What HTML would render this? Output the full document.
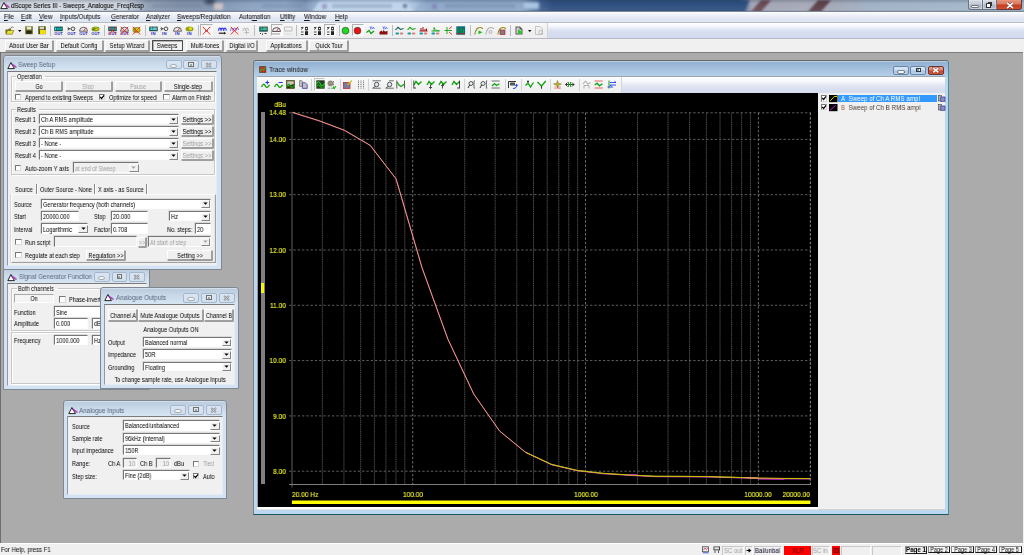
<!DOCTYPE html><html><head><meta charset="utf-8"><style>
html,body{margin:0;padding:0}
body{width:1024px;height:555px;overflow:hidden;position:relative;font-family:"Liberation Sans",sans-serif;background:#ababab}
div{position:absolute}
.t{white-space:nowrap;will-change:transform}
svg.a{position:absolute;overflow:visible}
</style></head><body>
<div style="left:0;top:0;width:1024px;height:11.5px;overflow:hidden;background:linear-gradient(90deg,#cdd3db 0px,#d3d9e1 60px,#c8d0da 125px,#909fb5 148px,#8393ab 180px,#8094b0 215px,#8ba2c0 250px,#8fa8c6 285px,#7d96b6 305px,#9db6d4 318px,#b9d0ea 330px,#bad1eb 405px,#9fb9d8 418px,#8ba5c7 428px,#8aa4c6 505px,#8ba6c8 520px,#3f5f8e 540px,#2e4f7e 552px,#2d4f7e 738px,#a0a4b4 752px,#a6a9b8 800px,#a2a8b7 836px,#a0b1c5 870px,#a3b6c9 960px,#9fb3c8 1024px)">
<div style="left:205px;top:-2px;width:10px;height:6px;background:#2a3040;filter:blur(2px);opacity:.8"></div>
<div style="left:214px;top:2.5px;width:9px;height:7px;background:#e6d2cc;filter:blur(1.5px);opacity:.75"></div>
<div style="left:523px;top:2px;width:16px;height:7px;background:#a9c3e0;filter:blur(1.5px)"></div>
<svg style="position:absolute;left:0;top:0;filter:blur(1px)" width="1024" height="12"><path d="M700 -2H750L744 14H700Z" fill="#2d4f7e"/><path d="M749 14L759 14L773 -2L763 -2Z" fill="#6a4a52"/><path d="M806 14L819 14L833 -2L820 -2Z" fill="#5c4048"/><path d="M312 12L320 1.2H405L414 12Z" fill="#bed4ec"/><path d="M414 12L422 1.2H520L528 12Z" fill="#8fa9ca" opacity="0.5"/></svg>
<div style="left:322px;top:3.5px;width:5px;height:5px;background:#8a78b0;filter:blur(1px);opacity:.6"></div>
<div style="left:403px;top:3.5px;width:4px;height:4px;background:#404a60;filter:blur(0.8px);opacity:.6"></div>
<div style="left:332px;top:4px;width:60px;height:3.5px;background:#7f90a8;filter:blur(1.2px);opacity:.45"></div>
<div style="left:432px;top:4px;width:5px;height:5px;background:#7a6aa8;filter:blur(1px);opacity:.5"></div>
<div style="left:445px;top:4px;width:70px;height:3.5px;background:#6a82a4;filter:blur(1.2px);opacity:.4"></div>
<div style="left:152px;top:4px;width:50px;height:3.5px;background:#6a7a92;filter:blur(1.2px);opacity:.35"></div>
<div style="left:262px;top:4px;width:40px;height:3.5px;background:#6a82a0;filter:blur(1.2px);opacity:.35"></div>
</div>
<div style="left:0;top:0;width:1024px;height:11.5px;background:linear-gradient(rgba(30,40,60,0.22),rgba(255,255,255,0) 30%,rgba(255,255,255,0.06) 80%,rgba(60,70,90,0.28))"></div>
<svg class="a" style="left:0.30px;top:2.20px" width="10" height="8"><path d="M3.9 0.5L0.8 6.6H7.4Z" fill="#fff" stroke="#1a1a1a" stroke-width="0.95" stroke-linejoin="round"/><path d="M4.3 2.2L9.4 5.6" stroke="#d0209a" stroke-width="1.1"/><path d="M4.6 1.5L9.6 4.8" stroke="#3a3ac8" stroke-width="0.55"/></svg>
<div class="t" style="left:10.80px;transform-origin:0 50%;top:1.40px;height:9px;line-height:9px;font-size:6.710px;color:#101010;transform:scaleX(0.9091);-webkit-text-stroke:0.12px #101010;">dScope Series III - Sweeps_Analogue_FreqResp</div>
<div style="left:967.90px;top:-1.00px;width:14.50px;height:11.30px;background:linear-gradient(#d2d9e3,#c4ccd8 48%,#a9b4c3 52%,#b6c0cd);border:1px solid #6a7382;border-right:none;border-radius:0 0 0 3px;box-sizing:border-box;box-shadow:inset 0 0 0 0.6px rgba(255,255,255,0.5)"></div>
<div style="left:972.40px;top:5.50px;width:5.60px;height:1.80px;background:#fff;box-shadow:0 0 0 0.6px #333;border-radius:0.5px"></div>
<div style="left:982.40px;top:-1.00px;width:14.50px;height:11.30px;background:linear-gradient(#d2d9e3,#c4ccd8 48%,#a9b4c3 52%,#b6c0cd);border:1px solid #6a7382;box-sizing:border-box;box-shadow:inset 0 0 0 0.6px rgba(255,255,255,0.5)"></div>
<div style="left:987.60px;top:1.60px;width:4.80px;height:4.60px;background:#fff;border:0.8px solid #333;border-top-width:1.3px;box-sizing:border-box"></div>
<div style="left:986.20px;top:3.30px;width:4.70px;height:4.60px;background:#fff;border:0.8px solid #333;border-top-width:1.3px;box-sizing:border-box"></div>
<div style="left:996.90px;top:-1.00px;width:25.10px;height:11.30px;background:linear-gradient(#e8957e,#db765c 48%,#c63b1e 52%,#d44e2e);border:1px solid #6a3a3a;border-left:none;border-radius:0 0 3px 0;box-sizing:border-box"></div>
<svg class="a" style="left:1005.5px;top:1.6px" width="8" height="7"><path d="M1 0.8L7 6.2M7 0.8L1 6.2" stroke="#5a2a2a" stroke-width="2.6" opacity="0.7"/><path d="M1 0.8L7 6.2M7 0.8L1 6.2" stroke="#fff" stroke-width="1.6"/></svg>
<div style="left:0.00px;top:11.00px;width:1024.00px;height:1.00px;background:#7d8796"></div>
<div style="left:0.00px;top:12.00px;width:1024.00px;height:10.30px;background:linear-gradient(#fdfdfe,#eef1f8 30%,#e3e8f4 60%,#dde3f1)"></div>
<div style="left:0.00px;top:22.30px;width:1024.00px;height:0.70px;background:#b9bec9"></div>
<div class="t" style="left:4.00px;transform-origin:0 50%;top:12.20px;height:9px;line-height:9px;font-size:6.944px;color:#141414;transform:scaleX(0.8929);-webkit-text-stroke:0.07px #141414;text-decoration-thickness:0.4px;text-decoration-color:rgba(0,0,0,0.55);text-underline-offset:0.7px;"><u>F</u>ile</div>
<div class="t" style="left:21.00px;transform-origin:0 50%;top:12.20px;height:9px;line-height:9px;font-size:6.944px;color:#141414;transform:scaleX(0.8929);-webkit-text-stroke:0.07px #141414;text-decoration-thickness:0.4px;text-decoration-color:rgba(0,0,0,0.55);text-underline-offset:0.7px;"><u>E</u>dit</div>
<div class="t" style="left:38.75px;transform-origin:0 50%;top:12.20px;height:9px;line-height:9px;font-size:6.944px;color:#141414;transform:scaleX(0.8929);-webkit-text-stroke:0.07px #141414;text-decoration-thickness:0.4px;text-decoration-color:rgba(0,0,0,0.55);text-underline-offset:0.7px;"><u>V</u>iew</div>
<div class="t" style="left:59.50px;transform-origin:0 50%;top:12.20px;height:9px;line-height:9px;font-size:6.944px;color:#141414;transform:scaleX(0.8929);-webkit-text-stroke:0.07px #141414;text-decoration-thickness:0.4px;text-decoration-color:rgba(0,0,0,0.55);text-underline-offset:0.7px;"><u>I</u>nputs/Outputs</div>
<div class="t" style="left:110.50px;transform-origin:0 50%;top:12.20px;height:9px;line-height:9px;font-size:6.944px;color:#141414;transform:scaleX(0.8929);-webkit-text-stroke:0.07px #141414;text-decoration-thickness:0.4px;text-decoration-color:rgba(0,0,0,0.55);text-underline-offset:0.7px;"><u>G</u>enerator</div>
<div class="t" style="left:145.75px;transform-origin:0 50%;top:12.20px;height:9px;line-height:9px;font-size:6.944px;color:#141414;transform:scaleX(0.8929);-webkit-text-stroke:0.07px #141414;text-decoration-thickness:0.4px;text-decoration-color:rgba(0,0,0,0.55);text-underline-offset:0.7px;"><u>A</u>nalyzer</div>
<div class="t" style="left:177.00px;transform-origin:0 50%;top:12.20px;height:9px;line-height:9px;font-size:6.944px;color:#141414;transform:scaleX(0.8929);-webkit-text-stroke:0.07px #141414;text-decoration-thickness:0.4px;text-decoration-color:rgba(0,0,0,0.55);text-underline-offset:0.7px;"><u>S</u>weeps/Regulation</div>
<div class="t" style="left:238.50px;transform-origin:0 50%;top:12.20px;height:9px;line-height:9px;font-size:6.944px;color:#141414;transform:scaleX(0.8929);-webkit-text-stroke:0.07px #141414;text-decoration-thickness:0.4px;text-decoration-color:rgba(0,0,0,0.55);text-underline-offset:0.7px;">Auto<u>m</u>ation</div>
<div class="t" style="left:279.80px;transform-origin:0 50%;top:12.20px;height:9px;line-height:9px;font-size:6.944px;color:#141414;transform:scaleX(0.8929);-webkit-text-stroke:0.07px #141414;text-decoration-thickness:0.4px;text-decoration-color:rgba(0,0,0,0.55);text-underline-offset:0.7px;"><u>U</u>tility</div>
<div class="t" style="left:303.90px;transform-origin:0 50%;top:12.20px;height:9px;line-height:9px;font-size:6.944px;color:#141414;transform:scaleX(0.8929);-webkit-text-stroke:0.07px #141414;text-decoration-thickness:0.4px;text-decoration-color:rgba(0,0,0,0.55);text-underline-offset:0.7px;"><u>W</u>indow</div>
<div class="t" style="left:335.20px;transform-origin:0 50%;top:12.20px;height:9px;line-height:9px;font-size:6.944px;color:#141414;transform:scaleX(0.8929);-webkit-text-stroke:0.07px #141414;text-decoration-thickness:0.4px;text-decoration-color:rgba(0,0,0,0.55);text-underline-offset:0.7px;"><u>H</u>elp</div>
<div style="left:0.00px;top:23.00px;width:1024.00px;height:15.00px;background:linear-gradient(#ffffff,#f7f8fc 20%,#e2e7f4 40%,#d6ddef 60%,#d4dbee)"></div>
<div style="left:0.00px;top:37.60px;width:1024.00px;height:1.00px;background:#b4b9c4"></div>
<div style="left:0.00px;top:23.00px;width:547.40px;height:14.60px;background:linear-gradient(#fafafa,#f3f3f3 30%,#efefef 60%,#eeeeee);"></div>
<div style="left:547.40px;top:23.00px;width:0.80px;height:14.60px;background:#d0d3da"></div>
<svg class="a" style="left:5.00px;top:25.80px" width="9" height="9" viewBox="0 0 9 9"><path d="M0.5 3.5H3L4 2.5H6V7.5H0.5Z" fill="#6b6b10"/><path d="M1 8.2L2.5 4.5H8.8L7.3 8.2Z" fill="#e8e040" stroke="#6b6b10" stroke-width="0.6"/><path d="M5.5 2.2L7.5 0.8L8.5 2" stroke="#555" stroke-width="0.7" fill="none"/></svg>
<svg class="a" style="left:18.00px;top:30.20px" width="4" height="3" viewBox="0 0 4 3"><path d="M0 0H3.5L1.75 2Z" fill="#000"/></svg>
<svg class="a" style="left:25.20px;top:26.00px" width="8" height="8.5" viewBox="0 0 8 8.5"><rect x="0.3" y="0.3" width="7.4" height="7.9" fill="#5a5a10"/><rect x="1.6" y="0.6" width="4.8" height="3" fill="#e8e8d0"/><rect x="1.6" y="5" width="4.8" height="2.6" fill="#222"/></svg>
<svg class="a" style="left:38.00px;top:26.00px" width="8.2" height="8.5" viewBox="0 0 8.2 8.5"><rect x="0.3" y="0.3" width="7.4" height="7.9" fill="#4a4a10"/><rect x="1.6" y="0.8" width="4.5" height="2.5" fill="#d8d8c0"/><path d="M2 4H7.8V8H2Z" fill="#f0e000"/></svg>
<div style="left:50.00px;top:25.00px;width:0.80px;height:11.00px;background:#b8bcc4"></div>
<svg class="a" style="left:54.00px;top:25.80px" width="9" height="5.5" viewBox="0 0 9 5.5"><rect x="0.3" y="0.6" width="8.4" height="4.6" fill="#1a3a3a"/><rect x="1" y="1.5" width="1.2" height="2.8" fill="#20e0e0"/><rect x="2.5" y="1.5" width="5.5" height="2.8" fill="#10a0a0"/></svg>
<svg class="a" style="left:54.00px;top:31.40px" width="9" height="3.8" viewBox="0 0 9 3.8"><text x="4.5" y="3.5" font-size="4.0" font-family="Liberation Sans" font-weight="bold" text-anchor="middle" fill="#2a2ab0" textLength="8.4" lengthAdjust="spacingAndGlyphs">OUT</text></svg>
<svg class="a" style="left:66.50px;top:25.80px" width="9" height="5.5" viewBox="0 0 9 5.5"><path d="M0.5 2.8H3.5M0.8 1.2L2.5 2.8L0.8 4.4" stroke="#222" stroke-width="0.8" fill="none"/><circle cx="6" cy="2.8" r="1.8" fill="none" stroke="#222" stroke-width="0.8"/></svg>
<svg class="a" style="left:66.50px;top:31.40px" width="9" height="3.8" viewBox="0 0 9 3.8"><text x="4.5" y="3.5" font-size="4.0" font-family="Liberation Sans" font-weight="bold" text-anchor="middle" fill="#2a2ab0" textLength="8.4" lengthAdjust="spacingAndGlyphs">OUT</text></svg>
<svg class="a" style="left:79.00px;top:25.80px" width="9" height="5.5" viewBox="0 0 9 5.5"><path d="M0.5 5.2A4 4 0 0 1 8.5 5.2Z" fill="#e8e8f0" stroke="#444" stroke-width="0.8"/><path d="M4.5 5L6.8 1.8" stroke="#e02020" stroke-width="0.8"/></svg>
<svg class="a" style="left:79.00px;top:31.40px" width="9" height="3.8" viewBox="0 0 9 3.8"><text x="4.5" y="3.5" font-size="4.0" font-family="Liberation Sans" font-weight="bold" text-anchor="middle" fill="#2a2ab0" textLength="8.4" lengthAdjust="spacingAndGlyphs">OUT</text></svg>
<svg class="a" style="left:90.50px;top:25.80px" width="9" height="5.5" viewBox="0 0 9 5.5"><ellipse cx="4.5" cy="3" rx="4" ry="2.5" fill="#90a020"/><circle cx="5.5" cy="2.5" r="1.6" fill="#e8e000"/><path d="M1 4L7.5 1.5" stroke="#207020" stroke-width="0.7"/></svg>
<svg class="a" style="left:90.50px;top:31.40px" width="9" height="3.8" viewBox="0 0 9 3.8"><text x="4.5" y="3.5" font-size="4.0" font-family="Liberation Sans" font-weight="bold" text-anchor="middle" fill="#2a2ab0" textLength="8.4" lengthAdjust="spacingAndGlyphs">OUT</text></svg>
<div style="left:103.50px;top:25.00px;width:0.80px;height:11.00px;background:#b8bcc4"></div>
<svg class="a" style="left:107.50px;top:25.80px" width="9" height="5.5" viewBox="0 0 9 5.5"><rect x="0.3" y="0.6" width="8.4" height="4.6" fill="#1a3a3a"/><rect x="1" y="1.5" width="7" height="2.8" fill="#10a0a0"/></svg>
<svg class="a" style="left:107.50px;top:31.40px" width="9" height="3.8" viewBox="0 0 9 3.8"><text x="4.5" y="3.5" font-size="4.0" font-family="Liberation Sans" font-weight="bold" text-anchor="middle" fill="#2a2ab0" textLength="8.4" lengthAdjust="spacingAndGlyphs">OUT</text></svg>
<svg class="a" style="left:107.50px;top:25.50px" width="9" height="9.5" viewBox="0 0 9 9.5"><path d="M0.8 0.8L8.2 8.5M8.2 0.8L0.8 8.5" stroke="#ff1a1a" stroke-width="0.95"/></svg>
<svg class="a" style="left:119.80px;top:25.80px" width="9" height="5.5" viewBox="0 0 9 5.5"><path d="M0.5 5.2A4 4 0 0 1 8.5 5.2Z" fill="#e8e8f0" stroke="#444" stroke-width="0.8"/></svg>
<svg class="a" style="left:119.80px;top:31.40px" width="9" height="3.8" viewBox="0 0 9 3.8"><text x="4.5" y="3.5" font-size="4.0" font-family="Liberation Sans" font-weight="bold" text-anchor="middle" fill="#2a2ab0" textLength="8.4" lengthAdjust="spacingAndGlyphs">OUT</text></svg>
<svg class="a" style="left:119.80px;top:25.50px" width="9" height="9.5" viewBox="0 0 9 9.5"><path d="M0.8 0.8L8.2 8.5M8.2 0.8L0.8 8.5" stroke="#ff1a1a" stroke-width="0.95"/></svg>
<svg class="a" style="left:131.50px;top:25.80px" width="9" height="8" viewBox="0 0 9 8"><ellipse cx="4.5" cy="4" rx="4" ry="3" fill="#90a020"/><circle cx="5.5" cy="3.5" r="1.6" fill="#e8e000"/></svg>
<svg class="a" style="left:131.50px;top:25.50px" width="9" height="9.5" viewBox="0 0 9 9.5"><path d="M0.8 0.8L8.2 8.5M8.2 0.8L0.8 8.5" stroke="#ff1a1a" stroke-width="0.95"/></svg>
<div style="left:145.00px;top:25.00px;width:0.80px;height:11.00px;background:#b8bcc4"></div>
<svg class="a" style="left:148.80px;top:25.80px" width="9" height="5.5" viewBox="0 0 9 5.5"><rect x="0.3" y="0.6" width="8.4" height="4.6" fill="#1a3a3a"/><rect x="1" y="1.5" width="7" height="2.8" fill="#10a0a0"/><text x="4.5" y="4" font-size="3" fill="#fff" text-anchor="middle" font-family="Liberation Sans">1.00</text></svg>
<svg class="a" style="left:148.80px;top:31.40px" width="9" height="3.8" viewBox="0 0 9 3.8"><text x="4.5" y="3.5" font-size="4.3" font-family="Liberation Sans" font-weight="bold" text-anchor="middle" letter-spacing="0.4" fill="#2a2ac0">IN</text></svg>
<svg class="a" style="left:160.30px;top:25.80px" width="9" height="5.5" viewBox="0 0 9 5.5"><path d="M0.5 2.8H3.5M0.8 1.2L2.5 2.8L0.8 4.4" stroke="#222" stroke-width="0.8" fill="none"/><circle cx="6" cy="2.8" r="1.8" fill="none" stroke="#222" stroke-width="0.8"/></svg>
<svg class="a" style="left:160.30px;top:31.40px" width="9" height="3.8" viewBox="0 0 9 3.8"><text x="4.5" y="3.5" font-size="4.3" font-family="Liberation Sans" font-weight="bold" text-anchor="middle" letter-spacing="0.4" fill="#2a2ac0">IN</text></svg>
<svg class="a" style="left:172.50px;top:25.80px" width="9" height="5.5" viewBox="0 0 9 5.5"><path d="M0.5 5.2A4 4 0 0 1 8.5 5.2Z" fill="#e8e8f0" stroke="#444" stroke-width="0.8"/><path d="M4.5 5L6.8 1.8" stroke="#e02020" stroke-width="0.8"/></svg>
<svg class="a" style="left:172.50px;top:31.40px" width="9" height="3.8" viewBox="0 0 9 3.8"><text x="4.5" y="3.5" font-size="4.3" font-family="Liberation Sans" font-weight="bold" text-anchor="middle" letter-spacing="0.4" fill="#2a2ac0">IN</text></svg>
<svg class="a" style="left:184.50px;top:25.80px" width="9" height="5.5" viewBox="0 0 9 5.5"><ellipse cx="4.5" cy="3" rx="4" ry="2.5" fill="#90a020"/><circle cx="5.5" cy="2.5" r="1.6" fill="#e8e000"/></svg>
<svg class="a" style="left:184.50px;top:31.40px" width="9" height="3.8" viewBox="0 0 9 3.8"><text x="4.5" y="3.5" font-size="4.3" font-family="Liberation Sans" font-weight="bold" text-anchor="middle" letter-spacing="0.4" fill="#2a2ac0">IN</text></svg>
<div style="left:198.00px;top:25.00px;width:0.80px;height:11.00px;background:#b8bcc4"></div>
<div style="left:200.00px;top:24.30px;width:12.50px;height:12.20px;background:#f6f6f6;border-top:1px solid #b0b0b0;border-left:1px solid #b0b0b0;border-bottom:1px solid #fff;border-right:1px solid #fff;box-sizing:border-box"></div>
<svg class="a" style="left:202.00px;top:25.60px" width="9" height="9.5" viewBox="0 0 9 9.5"><path d="M3 5H6" stroke="#333" stroke-width="1"/><path d="M0.8 0.8L8.2 8.5M8.2 0.8L0.8 8.5" stroke="#ff1a1a" stroke-width="0.95"/></svg>
<svg class="a" style="left:217.50px;top:25.80px" width="9" height="9" viewBox="0 0 9 9"><path d="M0.6 4.8C0.8 1.2 2.8 1.2 3 4.6M3.2 4.6C3.4 1.2 5.4 1.2 5.6 4.6M5.8 4.6C6 1.2 8 1.2 8.3 4.6" stroke="#2030f0" stroke-width="1.1" fill="none"/><path d="M0.8 7.2H7" stroke="#111" stroke-width="1.1"/><path d="M6.2 5.8L8 7.2L6.2 8.6Z" fill="#111"/></svg>
<svg class="a" style="left:230.00px;top:25.80px" width="9" height="9" viewBox="0 0 9 9"><path d="M0.5 5C1 1 2.5 1 3 4.5C3.5 1 5.5 1 6 4.5C6.5 1 8 1 8.5 4" stroke="#6060e0" stroke-width="0.9" fill="none"/><path d="M0.8 0.8L8.2 8.5M8.2 0.8L0.8 8.5" stroke="#ff1a1a" stroke-width="0.95"/></svg>
<svg class="a" style="left:241.50px;top:25.80px" width="9" height="9" viewBox="0 0 9 9"><path d="M1 5C1.5 1 3 1 3.5 4.5C4 1 6 1 6.5 4.5" stroke="#b0b0b0" stroke-width="0.9" fill="none"/><path d="M4.5 4V8.5M2.5 6.5H7" stroke="#b0b0b0" stroke-width="0.8"/></svg>
<div style="left:254.00px;top:25.00px;width:0.80px;height:11.00px;background:#b8bcc4"></div>
<svg class="a" style="left:258.50px;top:25.80px" width="9" height="9" viewBox="0 0 9 9"><rect x="0.3" y="0.6" width="8.4" height="5" fill="#0e3a3a"/><rect x="1" y="1.4" width="7" height="3.4" fill="#108070"/><text x="4.5" y="4.3" font-size="3" fill="#d0ffd0" text-anchor="middle" font-family="Liberation Sans">1.00</text><path d="M1 7.5H2M3.5 7.5V8.8M5.5 7.5H7.5" stroke="#222" stroke-width="0.9"/></svg>
<div style="left:270.50px;top:24.30px;width:12.00px;height:12.20px;background:#f6f6f6;border-top:1px solid #b0b0b0;border-left:1px solid #b0b0b0;border-bottom:1px solid #fff;border-right:1px solid #fff;box-sizing:border-box"></div>
<svg class="a" style="left:272.00px;top:25.80px" width="9" height="9" viewBox="0 0 9 9"><path d="M0.5 5.5A4 4 0 0 1 8.5 5.5Z" fill="#e8e8f0" stroke="#333" stroke-width="0.8"/><path d="M4.5 5.2L6.8 2" stroke="#e02020" stroke-width="0.8"/><path d="M0.5 8H8" stroke="#222" stroke-width="0.8" stroke-dasharray="1 1"/></svg>
<svg class="a" style="left:283.50px;top:25.80px" width="9" height="9" viewBox="0 0 9 9"><path d="M0.5 1H8V5H0.5Z" fill="none" stroke="#b8b8b8" stroke-width="0.9"/><path d="M0.5 8H8" stroke="#c0c0c0" stroke-width="0.8" stroke-dasharray="1 1"/></svg>
<div style="left:296.00px;top:25.00px;width:0.80px;height:11.00px;background:#b8bcc4"></div>
<svg class="a" style="left:300.00px;top:25.80px" width="9" height="9.5" viewBox="0 0 9 9.5"><path d="M1 1.5H3.5M1 3.5L3 2M1 6H3.5M1 8.5H3.5" stroke="#222" stroke-width="0.8"/><rect x="5" y="0.8" width="3" height="3.8" rx="1" fill="#222"/><rect x="5" y="5.2" width="3" height="3.8" fill="#222"/><rect x="5.8" y="2" width="1.4" height="1.2" fill="#fff"/></svg>
<svg class="a" style="left:312.50px;top:25.80px" width="9" height="9.5" viewBox="0 0 9 9.5"><path d="M1 1.5H3.5M1 3.5L3 2M1 6H3.5M1 8.5H3.5" stroke="#222" stroke-width="0.8"/><rect x="5" y="0.8" width="3" height="3.8" rx="1" fill="#222"/><rect x="5" y="5.2" width="3" height="3.8" fill="#222"/><rect x="5.8" y="2" width="1.4" height="1.2" fill="#fff"/></svg>
<div style="left:323.50px;top:24.30px;width:12.00px;height:12.20px;background:#f6f6f6;border-top:1px solid #b0b0b0;border-left:1px solid #b0b0b0;border-bottom:1px solid #fff;border-right:1px solid #fff;box-sizing:border-box"></div>
<svg class="a" style="left:325.50px;top:25.80px" width="9" height="9.5" viewBox="0 0 9 9.5"><path d="M1 1.5H3.5M1 3.5L3 2M1 6H3.5M1 8.5H3.5" stroke="#222" stroke-width="0.8"/><rect x="5" y="0.8" width="3" height="3.8" rx="1" fill="#222"/><rect x="5" y="5.2" width="3" height="3.8" fill="#222"/><rect x="5.8" y="2" width="1.4" height="1.2" fill="#fff"/></svg>
<div style="left:338.50px;top:25.00px;width:0.80px;height:11.00px;background:#b8bcc4"></div>
<svg class="a" style="left:341.00px;top:25.80px" width="9" height="9" viewBox="0 0 9 9"><circle cx="4.5" cy="4.7" r="3.4" fill="#18e018" stroke="#404040" stroke-width="0.7"/></svg>
<div style="left:351.50px;top:24.30px;width:12.50px;height:12.20px;background:#f6f6f6;border-top:1px solid #b0b0b0;border-left:1px solid #b0b0b0;border-bottom:1px solid #fff;border-right:1px solid #fff;box-sizing:border-box"></div>
<svg class="a" style="left:353.00px;top:25.80px" width="9" height="9" viewBox="0 0 9 9"><circle cx="4.5" cy="4.7" r="3.4" fill="#f01010" stroke="#404040" stroke-width="0.7"/></svg>
<svg class="a" style="left:366.00px;top:25.80px" width="9" height="9" viewBox="0 0 9 9"><path d="M0.5 6.5L3 4.5L5 7.5L8 5" stroke="#10a010" stroke-width="1.2" fill="none"/><path d="M4 0.5L5 3.5M5.5 0.5L6.5 3M7 1L8.5 3" stroke="#3050ff" stroke-width="0.8"/></svg>
<svg class="a" style="left:378.50px;top:25.80px" width="9" height="9" viewBox="0 0 9 9"><path d="M0.5 8.5V6L2.5 4.5L4 6V4L6 5.5L8.5 5V8.5Z" fill="#8a1010"/><path d="M4 0.5L5 3.5M5.5 0.5L6.5 3M7 1L8.5 3" stroke="#3050ff" stroke-width="0.8"/></svg>
<div style="left:392.00px;top:25.00px;width:0.80px;height:11.00px;background:#b8bcc4"></div>
<svg class="a" style="left:394.80px;top:25.80px" width="9" height="9" viewBox="0 0 9 9"><path d="M0.5 4L3 1.3L5.5 3.5L8.5 2.5" stroke="#105a5a" stroke-width="1.1" fill="none"/><rect x="0.5" y="6.5" width="3.5" height="2" rx="0.8" fill="#10a0a0"/><rect x="4.8" y="6.5" width="3.5" height="2" rx="0.8" fill="#e08080"/></svg>
<svg class="a" style="left:407.30px;top:25.80px" width="9" height="9" viewBox="0 0 9 9"><path d="M0.5 4L3 1.3L5.5 3.5L8.5 2.5" stroke="#10a010" stroke-width="1.1" fill="none"/><rect x="0.5" y="6.5" width="3.5" height="2" rx="0.8" fill="#10a0a0"/><rect x="4.8" y="6.5" width="3.5" height="2" rx="0.8" fill="#e08080"/></svg>
<svg class="a" style="left:419.00px;top:25.80px" width="9" height="9" viewBox="0 0 9 9"><path d="M0.5 5H8.5M2 5V2M4 5V1M6 5V3M7.5 5V2.5" stroke="#a01010" stroke-width="1"/><rect x="0.5" y="6.5" width="3.5" height="2" rx="0.8" fill="#10a0a0"/><rect x="4.8" y="6.5" width="3.5" height="2" rx="0.8" fill="#e08080"/></svg>
<svg class="a" style="left:431.00px;top:25.80px" width="9" height="9" viewBox="0 0 9 9"><path d="M0.5 5H8.5M3 5V1.5C3.5 4 5 4.5 8.5 4.8" stroke="#10a010" stroke-width="0.9" fill="none"/><rect x="0.5" y="6.5" width="3.5" height="2" rx="0.8" fill="#10a0a0"/><rect x="4.8" y="6.5" width="3.5" height="2" rx="0.8" fill="#e08080"/></svg>
<svg class="a" style="left:443.50px;top:25.80px" width="9" height="9" viewBox="0 0 9 9"><path d="M0.5 4.5H8M3 1V8" stroke="#10a010" stroke-width="0.9"/><path d="M5 3L8 0.5M5 6L8 8.5" stroke="#f02020" stroke-width="0.9"/></svg>
<svg class="a" style="left:456.00px;top:25.80px" width="9.5" height="9" viewBox="0 0 9.5 9"><rect x="0.3" y="0.3" width="8.8" height="8.4" fill="#106a7a"/><path d="M2 7V2M5 7V2M7.5 7V3" stroke="#10c010" stroke-width="0.7"/><path d="M0.5 7.8H9" stroke="#c02020" stroke-width="0.8"/></svg>
<div style="left:470.00px;top:25.00px;width:0.80px;height:11.00px;background:#b8bcc4"></div>
<svg class="a" style="left:473.50px;top:25.80px" width="9" height="9" viewBox="0 0 9 9"><path d="M0.8 8.5C1.5 4 3 1.5 6 1.5C7.5 1.5 8.5 2.5 8.5 3" stroke="#8a8a10" stroke-width="1.1" fill="none"/><path d="M4.5 4.5L8.5 6.3L4.5 8.2Z" fill="#10c010"/></svg>
<svg class="a" style="left:484.80px;top:25.80px" width="9" height="9" viewBox="0 0 9 9"><path d="M0.8 8.5C1.5 4 3 1.5 6 1.5C7.5 1.5 8.5 2.5 8.5 3" stroke="#b0b0b0" stroke-width="1.1" fill="none"/><circle cx="5.5" cy="6" r="1.5" fill="none" stroke="#a0a0a0" stroke-width="0.8"/></svg>
<svg class="a" style="left:497.20px;top:25.80px" width="9" height="9" viewBox="0 0 9 9"><path d="M0.8 8.5C1.5 4 3 1.5 6 1.5C7.5 1.5 8.5 2.5 8.5 3" stroke="#8a8a10" stroke-width="1.1" fill="none"/><rect x="3" y="4" width="5" height="4.6" fill="#7a7a90" stroke="#c02020" stroke-width="0.7"/></svg>
<div style="left:509.50px;top:25.00px;width:0.80px;height:11.00px;background:#b8bcc4"></div>
<svg class="a" style="left:514.50px;top:25.80px" width="8" height="9" viewBox="0 0 8 9"><path d="M0.5 0.5H5L7.5 3V8.5H0.5Z" fill="#5a5a5a"/><path d="M1.5 1.5H4.5V3.5H6.5V7.5H1.5Z" fill="#d0d0d0"/><path d="M3 3.5L7.5 6L3 8.5Z" fill="#18d018"/></svg>
<svg class="a" style="left:527.50px;top:30.20px" width="4" height="3" viewBox="0 0 4 3"><path d="M0 0H3.5L1.75 2Z" fill="#000"/></svg>
<svg class="a" style="left:534.50px;top:25.80px" width="8" height="9" viewBox="0 0 8 9"><path d="M0.5 0.5H5L7.5 3V8.5H0.5Z" fill="#f0f0f0" stroke="#b0b0b0" stroke-width="0.7"/><circle cx="5.5" cy="6.2" r="1.8" fill="none" stroke="#b0b0b0" stroke-width="0.8"/></svg>
<div style="left:0.00px;top:38.60px;width:1024.00px;height:13.40px;background:#f0f0f0"></div>
<div style="left:5.00px;top:40.40px;width:48.10px;height:10.40px;background:#f0f0f0;border-top:1px solid #fff;border-left:1px solid #fff;border-right:1px solid #a0a0a0;border-bottom:1px solid #a0a0a0;box-shadow:0.6px 0.6px 0 #696969;box-sizing:border-box;"></div>
<div class="t" style="left:-70.95px;width:200px;text-align:center;transform-origin:50% 50%;top:42.40px;height:8px;line-height:8px;font-size:7.076px;color:#000;transform:scaleX(0.8197);">About User Bar</div>
<div style="left:56.00px;top:40.40px;width:46.50px;height:10.40px;background:#f0f0f0;border-top:1px solid #fff;border-left:1px solid #fff;border-right:1px solid #a0a0a0;border-bottom:1px solid #a0a0a0;box-shadow:0.6px 0.6px 0 #696969;box-sizing:border-box;"></div>
<div class="t" style="left:-20.75px;width:200px;text-align:center;transform-origin:50% 50%;top:42.40px;height:8px;line-height:8px;font-size:7.076px;color:#000;transform:scaleX(0.8197);">Default Config</div>
<div style="left:105.40px;top:40.40px;width:43.90px;height:10.40px;background:#f0f0f0;border-top:1px solid #fff;border-left:1px solid #fff;border-right:1px solid #a0a0a0;border-bottom:1px solid #a0a0a0;box-shadow:0.6px 0.6px 0 #696969;box-sizing:border-box;"></div>
<div class="t" style="left:27.35px;width:200px;text-align:center;transform-origin:50% 50%;top:42.40px;height:8px;line-height:8px;font-size:7.076px;color:#000;transform:scaleX(0.8197);">Setup Wizard</div>
<div style="left:151.80px;top:40.40px;width:31.20px;height:10.40px;background:#f2f2f2;border:0.9px solid #4a4a4a;box-shadow:inset 0.8px 0.8px 0 #a0a0a0;border-radius:0.6px;box-sizing:border-box;"></div>
<div class="t" style="left:67.40px;width:200px;text-align:center;transform-origin:50% 50%;top:42.40px;height:8px;line-height:8px;font-size:7.076px;color:#000;transform:scaleX(0.8197);">Sweeps</div>
<div style="left:186.20px;top:40.40px;width:37.10px;height:10.40px;background:#f0f0f0;border-top:1px solid #fff;border-left:1px solid #fff;border-right:1px solid #a0a0a0;border-bottom:1px solid #a0a0a0;box-shadow:0.6px 0.6px 0 #696969;box-sizing:border-box;"></div>
<div class="t" style="left:104.75px;width:200px;text-align:center;transform-origin:50% 50%;top:42.40px;height:8px;line-height:8px;font-size:7.076px;color:#000;transform:scaleX(0.8197);">Multi-tones</div>
<div style="left:226.30px;top:40.40px;width:31.00px;height:10.40px;background:#f0f0f0;border-top:1px solid #fff;border-left:1px solid #fff;border-right:1px solid #a0a0a0;border-bottom:1px solid #a0a0a0;box-shadow:0.6px 0.6px 0 #696969;box-sizing:border-box;"></div>
<div class="t" style="left:141.80px;width:200px;text-align:center;transform-origin:50% 50%;top:42.40px;height:8px;line-height:8px;font-size:7.076px;color:#000;transform:scaleX(0.8197);">Digital I/O</div>
<div style="left:266.00px;top:40.40px;width:40.50px;height:10.40px;background:#f0f0f0;border-top:1px solid #fff;border-left:1px solid #fff;border-right:1px solid #a0a0a0;border-bottom:1px solid #a0a0a0;box-shadow:0.6px 0.6px 0 #696969;box-sizing:border-box;"></div>
<div class="t" style="left:186.25px;width:200px;text-align:center;transform-origin:50% 50%;top:42.40px;height:8px;line-height:8px;font-size:7.076px;color:#000;transform:scaleX(0.8197);">Applications</div>
<div style="left:309.20px;top:40.40px;width:38.80px;height:10.40px;background:#f0f0f0;border-top:1px solid #fff;border-left:1px solid #fff;border-right:1px solid #a0a0a0;border-bottom:1px solid #a0a0a0;box-shadow:0.6px 0.6px 0 #696969;box-sizing:border-box;"></div>
<div class="t" style="left:228.60px;width:200px;text-align:center;transform-origin:50% 50%;top:42.40px;height:8px;line-height:8px;font-size:7.076px;color:#000;transform:scaleX(0.8197);">Quick Tour</div>
<div style="left:0.00px;top:52.00px;width:1023.00px;height:491.40px;background:#ababab;border-top:1.2px solid #7d7d7d;border-left:1.4px solid #6e6e6e;box-sizing:border-box"></div>
<div style="left:1022.60px;top:52.00px;width:1.40px;height:491.40px;background:#f0f0f0"></div>
<div style="left:0.00px;top:543.40px;width:1024.00px;height:11.60px;background:#f0f0f0"></div>
<div class="t" style="left:1.20px;transform-origin:0 50%;top:544.90px;height:9px;line-height:9px;font-size:6.720px;color:#111;transform:scaleX(0.8929);-webkit-text-stroke:0.04px #111;">For Help, press F1</div>
<div style="left:2.70px;top:267.10px;width:147.70px;height:123.20px;background:linear-gradient(#dde7f1 0px,#bccddf 1.6px,#c9d9ea 7.2px,#d9e7f4 16.0px) 0 0/100% 16.0px no-repeat,#d3e3f3;border:1px solid #7f8790;border-radius:3px 3px 0 0;box-sizing:border-box;"></div>
<div style="left:6.90px;top:283.10px;width:140.30px;height:103.30px;background:#f0f0f0;border-top:1px solid #7a7a7a;border-left:1px solid #8f9aa6;border-right:1px solid #e4ecf4;border-bottom:1px solid #e4ecf4;box-sizing:border-box;"></div>
<svg class="a" style="left:7.10px;top:273.50px" width="10" height="8"><path d="M3.9 0.5L0.8 6.6H7.4Z" fill="#fff" stroke="#1a1a1a" stroke-width="0.95" stroke-linejoin="round"/><path d="M4.3 2.2L9.4 5.6" stroke="#d0209a" stroke-width="1.1"/><path d="M4.6 1.5L9.6 4.8" stroke="#3a3ac8" stroke-width="0.55"/></svg>
<div class="t" style="left:18.70px;transform-origin:0 50%;top:272.30px;height:9px;line-height:9px;font-size:7.000px;color:#5a6a80;transform:scaleX(0.8929);-webkit-text-stroke:0.03px #5a6a80;">Signal Generator Function</div>
<div style="left:93.60px;top:272.30px;width:16.00px;height:9.30px;background:linear-gradient(#d9e5f1,#d2dfed);border:1px solid #a6b7cc;border-radius:2px;box-sizing:border-box;"></div>
<div style="left:98.70px;top:276.95px;width:5.80px;height:2.00px;background:#f2f3f5;box-shadow:0 0 0 0.55px #7a7a7a;border-radius:1px"></div>
<div style="left:111.50px;top:272.30px;width:15.50px;height:9.30px;background:linear-gradient(#d9e5f1,#d2dfed);border:1px solid #a6b7cc;border-radius:2px;box-sizing:border-box;"></div>
<div style="left:116.55px;top:274.35px;width:5.40px;height:4.90px;background:#e4eaf0;border:0.7px solid #707070;border-top-width:1.2px;box-sizing:border-box;"></div>
<div style="left:118.05px;top:276.05px;width:2.40px;height:1.80px;background:#9aa6b4;"></div>
<div style="left:128.90px;top:272.30px;width:16.00px;height:9.30px;background:linear-gradient(#d9e5f1,#d2dfed);border:1px solid #a6b7cc;border-radius:2px;box-sizing:border-box;"></div>
<svg class="a" style="left:133.30px;top:273.75px" width="7.2" height="6.4"><path d="M1.2 1L6 5.4M6 1L1.2 5.4" stroke="#80868e" stroke-width="1.9"/><path d="M1.2 1L6 5.4M6 1L1.2 5.4" stroke="#f4f6f8" stroke-width="0.6"/></svg>
<div style="left:11.30px;top:287.70px;width:135.20px;height:43.40px;border:1px solid #c8c8c8;box-shadow:inset 1px 1px 0 #fff, 1px 1px 0 #fff;box-sizing:border-box;"></div>
<div style="left:17.40px;top:286.70px;width:40.50px;height:2.50px;background:#f0f0f0"></div>
<div class="t" style="left:17.90px;transform-origin:0 50%;top:284.50px;height:8px;line-height:8px;font-size:6.893px;color:#000;transform:scaleX(0.8197);">Both channels</div>
<div style="left:14.10px;top:293.90px;width:39.50px;height:9.40px;background:#f4f4f4;border-top:1.2px solid #a8a8a8;border-left:1.2px solid #a8a8a8;border-right:1px solid #fff;border-bottom:1px solid #fff;box-sizing:border-box;"></div>
<div class="t" style="left:-66.15px;width:200px;text-align:center;transform-origin:50% 50%;top:295.40px;height:8px;line-height:8px;font-size:6.893px;color:#000;transform:scaleX(0.8197);">On</div>
<div style="left:59.30px;top:296.30px;width:6.40px;height:6.40px;background:#fff;border-top:0.9px solid #777;border-left:0.9px solid #777;border-right:0.9px solid #d8d8d8;border-bottom:0.9px solid #d8d8d8;box-sizing:border-box;"></div>
<div class="t" style="left:68.70px;transform-origin:0 50%;top:296.10px;height:8px;line-height:8px;font-size:6.893px;color:#000;transform:scaleX(0.8197);">Phase-invert</div>
<div class="t" style="left:13.90px;transform-origin:0 50%;top:309.00px;height:8px;line-height:8px;font-size:6.893px;color:#000;transform:scaleX(0.8197);">Function</div>
<div style="left:53.90px;top:306.30px;width:92.60px;height:11.00px;background:#fff;border-top:1.1px solid #767676;border-left:1.1px solid #767676;border-right:1px solid #fcfcfc;border-bottom:1px solid #fcfcfc;box-shadow:-0.5px -0.5px 0 #c4c4c4;box-sizing:border-box;"></div>
<div class="t" style="left:55.80px;transform-origin:0 50%;top:308.80px;height:8px;line-height:8px;font-size:6.893px;color:#000;transform:scaleX(0.8197);">Sine</div>
<div class="t" style="left:13.90px;transform-origin:0 50%;top:320.30px;height:8px;line-height:8px;font-size:6.893px;color:#000;transform:scaleX(0.8197);">Amplitude</div>
<div style="left:53.90px;top:318.20px;width:34.10px;height:10.50px;background:#fff;border-top:1.1px solid #767676;border-left:1.1px solid #767676;border-right:1px solid #fcfcfc;border-bottom:1px solid #fcfcfc;box-shadow:-0.5px -0.5px 0 #c4c4c4;box-sizing:border-box;"></div>
<div class="t" style="left:55.80px;transform-origin:0 50%;top:320.45px;height:8px;line-height:8px;font-size:6.893px;color:#000;transform:scaleX(0.8197);">0.000</div>
<div style="left:91.90px;top:318.20px;width:54.60px;height:10.50px;background:#fff;border-top:1.1px solid #767676;border-left:1.1px solid #767676;border-right:1px solid #fcfcfc;border-bottom:1px solid #fcfcfc;box-shadow:-0.5px -0.5px 0 #c4c4c4;box-sizing:border-box;"></div>
<div class="t" style="left:94.20px;transform-origin:0 50%;top:320.45px;height:8px;line-height:8px;font-size:6.893px;color:#000;transform:scaleX(0.8197);">dBu</div>
<div style="left:136.50px;top:319.80px;width:9.60px;height:8.30px;background:#f0f0f0;border-top:0.6px solid #fafafa;border-left:0.6px solid #fafafa;border-right:1px solid #858585;border-bottom:1px solid #858585;box-sizing:border-box;"></div>
<svg class="a" style="left:138.80px;top:322.05px" width="5" height="3"><path d="M0.3 0.4H4.7L2.5 2.8Z" fill="#000"/></svg>
<div style="left:11.30px;top:332.40px;width:135.20px;height:51.90px;border:1px solid #c8c8c8;box-shadow:inset 1px 1px 0 #fff, 1px 1px 0 #fff;box-sizing:border-box;"></div>
<div class="t" style="left:13.90px;transform-origin:0 50%;top:337.30px;height:8px;line-height:8px;font-size:6.893px;color:#000;transform:scaleX(0.8197);">Frequency</div>
<div style="left:53.90px;top:334.60px;width:34.10px;height:10.40px;background:#fff;border-top:1.1px solid #767676;border-left:1.1px solid #767676;border-right:1px solid #fcfcfc;border-bottom:1px solid #fcfcfc;box-shadow:-0.5px -0.5px 0 #c4c4c4;box-sizing:border-box;"></div>
<div class="t" style="left:55.80px;transform-origin:0 50%;top:336.80px;height:8px;line-height:8px;font-size:6.893px;color:#000;transform:scaleX(0.8197);">1000.000</div>
<div style="left:91.90px;top:334.60px;width:54.60px;height:10.40px;background:#fff;border-top:1.1px solid #767676;border-left:1.1px solid #767676;border-right:1px solid #fcfcfc;border-bottom:1px solid #fcfcfc;box-shadow:-0.5px -0.5px 0 #c4c4c4;box-sizing:border-box;"></div>
<div class="t" style="left:94.20px;transform-origin:0 50%;top:336.80px;height:8px;line-height:8px;font-size:6.893px;color:#000;transform:scaleX(0.8197);">Hz</div>
<div style="left:136.50px;top:336.20px;width:9.60px;height:8.20px;background:#f0f0f0;border-top:0.6px solid #fafafa;border-left:0.6px solid #fafafa;border-right:1px solid #858585;border-bottom:1px solid #858585;box-sizing:border-box;"></div>
<svg class="a" style="left:138.80px;top:338.40px" width="5" height="3"><path d="M0.3 0.4H4.7L2.5 2.8Z" fill="#000"/></svg>
<div style="left:3.00px;top:55.30px;width:219.30px;height:214.50px;background:linear-gradient(#dde7f1 0px,#bccddf 1.6px,#c9d9ea 7.1px,#d9e7f4 15.8px) 0 0/100% 15.8px no-repeat,#d3e3f3;border:1px solid #7f8790;border-radius:3px 3px 0 0;box-sizing:border-box;"></div>
<div style="left:7.00px;top:71.10px;width:210.20px;height:194.90px;background:#f0f0f0;border-top:1px solid #7a7a7a;border-left:1px solid #8f9aa6;border-right:1px solid #e4ecf4;border-bottom:1px solid #e4ecf4;box-sizing:border-box;"></div>
<svg class="a" style="left:7.40px;top:61.60px" width="10" height="8"><path d="M3.9 0.5L0.8 6.6H7.4Z" fill="#fff" stroke="#1a1a1a" stroke-width="0.95" stroke-linejoin="round"/><path d="M4.3 2.2L9.4 5.6" stroke="#d0209a" stroke-width="1.1"/><path d="M4.6 1.5L9.6 4.8" stroke="#3a3ac8" stroke-width="0.55"/></svg>
<div class="t" style="left:17.70px;transform-origin:0 50%;top:60.40px;height:9px;line-height:9px;font-size:7.000px;color:#5a6a80;transform:scaleX(0.8929);-webkit-text-stroke:0.03px #5a6a80;">Sweep Setup</div>
<div style="left:165.50px;top:60.10px;width:16.00px;height:9.30px;background:linear-gradient(#d9e5f1,#d2dfed);border:1px solid #a6b7cc;border-radius:2px;box-sizing:border-box;"></div>
<div style="left:170.60px;top:64.75px;width:5.80px;height:2.00px;background:#f2f3f5;box-shadow:0 0 0 0.55px #7a7a7a;border-radius:1px"></div>
<div style="left:183.40px;top:60.10px;width:15.50px;height:9.30px;background:linear-gradient(#d9e5f1,#d2dfed);border:1px solid #a6b7cc;border-radius:2px;box-sizing:border-box;"></div>
<div style="left:188.45px;top:62.15px;width:5.40px;height:4.90px;background:#e4eaf0;border:0.7px solid #707070;border-top-width:1.2px;box-sizing:border-box;"></div>
<div style="left:189.95px;top:63.85px;width:2.40px;height:1.80px;background:#9aa6b4;"></div>
<div style="left:200.80px;top:60.10px;width:16.00px;height:9.30px;background:linear-gradient(#d9e5f1,#d2dfed);border:1px solid #a6b7cc;border-radius:2px;box-sizing:border-box;"></div>
<svg class="a" style="left:205.20px;top:61.55px" width="7.2" height="6.4"><path d="M1.2 1L6 5.4M6 1L1.2 5.4" stroke="#80868e" stroke-width="1.9"/><path d="M1.2 1L6 5.4M6 1L1.2 5.4" stroke="#f4f6f8" stroke-width="0.6"/></svg>
<div style="left:10.70px;top:75.80px;width:203.90px;height:25.90px;border:1px solid #c8c8c8;box-shadow:inset 1px 1px 0 #fff, 1px 1px 0 #fff;box-sizing:border-box;"></div>
<div style="left:16.00px;top:74.80px;width:28.50px;height:2.50px;background:#f0f0f0"></div>
<div class="t" style="left:16.50px;transform-origin:0 50%;top:72.60px;height:8px;line-height:8px;font-size:6.893px;color:#000;transform:scaleX(0.8197);">Operation</div>
<div style="left:15.00px;top:80.90px;width:47.40px;height:10.10px;background:#f0f0f0;border-top:1px solid #fff;border-left:1px solid #fff;border-right:1px solid #a0a0a0;border-bottom:1px solid #a0a0a0;box-shadow:0.6px 0.6px 0 #696969;box-sizing:border-box;"></div>
<div class="t" style="left:-61.30px;width:200px;text-align:center;transform-origin:50% 50%;top:82.75px;height:8px;line-height:8px;font-size:6.893px;color:#000;transform:scaleX(0.8197);">Go</div>
<div style="left:65.00px;top:80.90px;width:46.60px;height:10.10px;background:#f0f0f0;border-top:1px solid #fff;border-left:1px solid #fff;border-right:1px solid #a0a0a0;border-bottom:1px solid #a0a0a0;box-shadow:0.6px 0.6px 0 #696969;box-sizing:border-box;"></div>
<div class="t" style="left:-11.70px;width:200px;text-align:center;transform-origin:50% 50%;top:82.75px;height:8px;line-height:8px;font-size:6.893px;color:#a0a0a0;transform:scaleX(0.8197);">Stop</div>
<div style="left:114.60px;top:80.90px;width:46.70px;height:10.10px;background:#f0f0f0;border-top:1px solid #fff;border-left:1px solid #fff;border-right:1px solid #a0a0a0;border-bottom:1px solid #a0a0a0;box-shadow:0.6px 0.6px 0 #696969;box-sizing:border-box;"></div>
<div class="t" style="left:37.95px;width:200px;text-align:center;transform-origin:50% 50%;top:82.75px;height:8px;line-height:8px;font-size:6.893px;color:#a0a0a0;transform:scaleX(0.8197);">Pause</div>
<div style="left:164.40px;top:80.90px;width:47.30px;height:10.10px;background:#f0f0f0;border-top:1px solid #fff;border-left:1px solid #fff;border-right:1px solid #a0a0a0;border-bottom:1px solid #a0a0a0;box-shadow:0.6px 0.6px 0 #696969;box-sizing:border-box;"></div>
<div class="t" style="left:88.05px;width:200px;text-align:center;transform-origin:50% 50%;top:82.75px;height:8px;line-height:8px;font-size:6.893px;color:#000;transform:scaleX(0.8197);">Single-step</div>
<div style="left:15.00px;top:93.60px;width:6.40px;height:6.40px;background:#fff;border-top:0.9px solid #777;border-left:0.9px solid #777;border-right:0.9px solid #d8d8d8;border-bottom:0.9px solid #d8d8d8;box-sizing:border-box;"></div>
<div class="t" style="left:24.60px;transform-origin:0 50%;top:93.60px;height:8px;line-height:8px;font-size:6.893px;color:#000;transform:scaleX(0.8197);">Append to existing Sweeps</div>
<div style="left:98.80px;top:93.60px;width:6.40px;height:6.40px;background:#fff;border-top:0.9px solid #777;border-left:0.9px solid #777;border-right:0.9px solid #d8d8d8;border-bottom:0.9px solid #d8d8d8;box-sizing:border-box;"></div>
<svg class="a" style="left:98.80px;top:93.60px" width="6.4" height="6.4"><path d="M1.2 2.9L2.6 4.5L5.1 1.4" stroke="#000" stroke-width="1.25" fill="none"/></svg>
<div class="t" style="left:108.50px;transform-origin:0 50%;top:93.60px;height:8px;line-height:8px;font-size:6.893px;color:#000;transform:scaleX(0.8197);">Optimize for speed</div>
<div style="left:163.20px;top:93.60px;width:6.40px;height:6.40px;background:#fff;border-top:0.9px solid #777;border-left:0.9px solid #777;border-right:0.9px solid #d8d8d8;border-bottom:0.9px solid #d8d8d8;box-sizing:border-box;"></div>
<div class="t" style="left:172.00px;transform-origin:0 50%;top:93.60px;height:8px;line-height:8px;font-size:6.893px;color:#000;transform:scaleX(0.8197);">Alarm on Finish</div>
<div style="left:10.70px;top:109.30px;width:204.80px;height:65.70px;border:1px solid #c8c8c8;box-shadow:inset 1px 1px 0 #fff, 1px 1px 0 #fff;box-sizing:border-box;"></div>
<div style="left:16.00px;top:108.30px;width:22.50px;height:2.50px;background:#f0f0f0"></div>
<div class="t" style="left:16.50px;transform-origin:0 50%;top:106.10px;height:8px;line-height:8px;font-size:6.893px;color:#000;transform:scaleX(0.8197);">Results</div>
<div class="t" style="left:14.90px;transform-origin:0 50%;top:116.10px;height:8px;line-height:8px;font-size:6.893px;color:#000;transform:scaleX(0.8197);">Result 1</div>
<div style="left:38.70px;top:114.00px;width:139.90px;height:10.20px;background:#fff;border-top:1.1px solid #767676;border-left:1.1px solid #767676;border-right:1px solid #fcfcfc;border-bottom:1px solid #fcfcfc;box-shadow:-0.5px -0.5px 0 #c4c4c4;box-sizing:border-box;"></div>
<div class="t" style="left:41.00px;transform-origin:0 50%;top:116.10px;height:8px;line-height:8px;font-size:6.893px;color:#000;transform:scaleX(0.8197);">Ch A RMS amplitude</div>
<div style="left:168.60px;top:115.60px;width:9.60px;height:8.00px;background:#f0f0f0;border-top:0.6px solid #fafafa;border-left:0.6px solid #fafafa;border-right:1px solid #858585;border-bottom:1px solid #858585;box-sizing:border-box;"></div>
<svg class="a" style="left:170.90px;top:117.70px" width="5" height="3"><path d="M0.3 0.4H4.7L2.5 2.8Z" fill="#000"/></svg>
<div style="left:181.40px;top:114.40px;width:31.60px;height:9.80px;background:#f0f0f0;border-top:1px solid #fff;border-left:1px solid #fff;border-right:1px solid #a0a0a0;border-bottom:1px solid #a0a0a0;box-shadow:0.6px 0.6px 0 #696969;box-sizing:border-box;"></div>
<div class="t" style="left:97.20px;width:200px;text-align:center;transform-origin:50% 50%;top:116.10px;height:8px;line-height:8px;font-size:6.893px;color:#000;transform:scaleX(0.8197);">Settings &gt;&gt;</div>
<div class="t" style="left:14.90px;transform-origin:0 50%;top:128.10px;height:8px;line-height:8px;font-size:6.893px;color:#000;transform:scaleX(0.8197);">Result 2</div>
<div style="left:38.70px;top:126.00px;width:139.90px;height:10.20px;background:#fff;border-top:1.1px solid #767676;border-left:1.1px solid #767676;border-right:1px solid #fcfcfc;border-bottom:1px solid #fcfcfc;box-shadow:-0.5px -0.5px 0 #c4c4c4;box-sizing:border-box;"></div>
<div class="t" style="left:41.00px;transform-origin:0 50%;top:128.10px;height:8px;line-height:8px;font-size:6.893px;color:#000;transform:scaleX(0.8197);">Ch B RMS amplitude</div>
<div style="left:168.60px;top:127.60px;width:9.60px;height:8.00px;background:#f0f0f0;border-top:0.6px solid #fafafa;border-left:0.6px solid #fafafa;border-right:1px solid #858585;border-bottom:1px solid #858585;box-sizing:border-box;"></div>
<svg class="a" style="left:170.90px;top:129.70px" width="5" height="3"><path d="M0.3 0.4H4.7L2.5 2.8Z" fill="#000"/></svg>
<div style="left:181.40px;top:126.40px;width:31.60px;height:9.80px;background:#f0f0f0;border-top:1px solid #fff;border-left:1px solid #fff;border-right:1px solid #a0a0a0;border-bottom:1px solid #a0a0a0;box-shadow:0.6px 0.6px 0 #696969;box-sizing:border-box;"></div>
<div class="t" style="left:97.20px;width:200px;text-align:center;transform-origin:50% 50%;top:128.10px;height:8px;line-height:8px;font-size:6.893px;color:#000;transform:scaleX(0.8197);">Settings &gt;&gt;</div>
<div class="t" style="left:14.90px;transform-origin:0 50%;top:140.10px;height:8px;line-height:8px;font-size:6.893px;color:#000;transform:scaleX(0.8197);">Result 3</div>
<div style="left:38.70px;top:138.00px;width:139.90px;height:10.20px;background:#fff;border-top:1.1px solid #767676;border-left:1.1px solid #767676;border-right:1px solid #fcfcfc;border-bottom:1px solid #fcfcfc;box-shadow:-0.5px -0.5px 0 #c4c4c4;box-sizing:border-box;"></div>
<div class="t" style="left:41.00px;transform-origin:0 50%;top:140.10px;height:8px;line-height:8px;font-size:6.893px;color:#000;transform:scaleX(0.8197);">- None -</div>
<div style="left:168.60px;top:139.60px;width:9.60px;height:8.00px;background:#f0f0f0;border-top:0.6px solid #fafafa;border-left:0.6px solid #fafafa;border-right:1px solid #858585;border-bottom:1px solid #858585;box-sizing:border-box;"></div>
<svg class="a" style="left:170.90px;top:141.70px" width="5" height="3"><path d="M0.3 0.4H4.7L2.5 2.8Z" fill="#000"/></svg>
<div style="left:181.40px;top:138.40px;width:31.60px;height:9.80px;background:#f0f0f0;border-top:1px solid #fff;border-left:1px solid #fff;border-right:1px solid #a0a0a0;border-bottom:1px solid #a0a0a0;box-shadow:0.6px 0.6px 0 #696969;box-sizing:border-box;"></div>
<div class="t" style="left:97.20px;width:200px;text-align:center;transform-origin:50% 50%;top:140.10px;height:8px;line-height:8px;font-size:6.893px;color:#a0a0a0;transform:scaleX(0.8197);">Settings &gt;&gt;</div>
<div class="t" style="left:14.90px;transform-origin:0 50%;top:152.10px;height:8px;line-height:8px;font-size:6.893px;color:#000;transform:scaleX(0.8197);">Result 4</div>
<div style="left:38.70px;top:150.00px;width:139.90px;height:10.20px;background:#fff;border-top:1.1px solid #767676;border-left:1.1px solid #767676;border-right:1px solid #fcfcfc;border-bottom:1px solid #fcfcfc;box-shadow:-0.5px -0.5px 0 #c4c4c4;box-sizing:border-box;"></div>
<div class="t" style="left:41.00px;transform-origin:0 50%;top:152.10px;height:8px;line-height:8px;font-size:6.893px;color:#000;transform:scaleX(0.8197);">- None -</div>
<div style="left:168.60px;top:151.60px;width:9.60px;height:8.00px;background:#f0f0f0;border-top:0.6px solid #fafafa;border-left:0.6px solid #fafafa;border-right:1px solid #858585;border-bottom:1px solid #858585;box-sizing:border-box;"></div>
<svg class="a" style="left:170.90px;top:153.70px" width="5" height="3"><path d="M0.3 0.4H4.7L2.5 2.8Z" fill="#000"/></svg>
<div style="left:181.40px;top:150.40px;width:31.60px;height:9.80px;background:#f0f0f0;border-top:1px solid #fff;border-left:1px solid #fff;border-right:1px solid #a0a0a0;border-bottom:1px solid #a0a0a0;box-shadow:0.6px 0.6px 0 #696969;box-sizing:border-box;"></div>
<div class="t" style="left:97.20px;width:200px;text-align:center;transform-origin:50% 50%;top:152.10px;height:8px;line-height:8px;font-size:6.893px;color:#a0a0a0;transform:scaleX(0.8197);">Settings &gt;&gt;</div>
<div style="left:15.00px;top:164.80px;width:6.40px;height:6.40px;background:#fff;border-top:0.9px solid #777;border-left:0.9px solid #777;border-right:0.9px solid #d8d8d8;border-bottom:0.9px solid #d8d8d8;box-sizing:border-box;"></div>
<div class="t" style="left:24.50px;transform-origin:0 50%;top:164.70px;height:8px;line-height:8px;font-size:6.893px;color:#000;transform:scaleX(0.8197);">Auto-zoom Y axis</div>
<div style="left:72.60px;top:162.00px;width:66.40px;height:11.10px;background:#f0f0f0;border-top:1.1px solid #767676;border-left:1.1px solid #767676;border-right:1px solid #fcfcfc;border-bottom:1px solid #fcfcfc;box-shadow:-0.5px -0.5px 0 #c4c4c4;box-sizing:border-box;"></div>
<div class="t" style="left:74.90px;transform-origin:0 50%;top:164.55px;height:8px;line-height:8px;font-size:6.893px;color:#a0a0a0;transform:scaleX(0.8197);">at end of Sweep</div>
<div style="left:129.00px;top:163.60px;width:9.60px;height:8.90px;background:#f0f0f0;border-top:0.6px solid #fafafa;border-left:0.6px solid #fafafa;border-right:1px solid #858585;border-bottom:1px solid #858585;box-sizing:border-box;"></div>
<svg class="a" style="left:131.30px;top:166.15px" width="5" height="3"><path d="M0.3 0.4H4.7L2.5 2.8Z" fill="#a0a0a0"/></svg>
<div class="t" style="left:14.50px;transform-origin:0 50%;top:185.70px;height:8px;line-height:8px;font-size:6.893px;color:#000;transform:scaleX(0.8197);">Source</div>
<div class="t" style="left:39.70px;transform-origin:0 50%;top:185.70px;height:8px;line-height:8px;font-size:6.893px;color:#000;transform:scaleX(0.8197);">Outer Source - None</div>
<div class="t" style="left:97.70px;transform-origin:0 50%;top:185.70px;height:8px;line-height:8px;font-size:6.893px;color:#000;transform:scaleX(0.8197);">X axis - as Source</div>
<div style="left:36.00px;top:184.00px;width:1.00px;height:9.80px;background:#8a8a8a;box-shadow:0.7px 0 0 #fff"></div>
<div style="left:93.90px;top:184.00px;width:1.00px;height:9.80px;background:#8a8a8a;box-shadow:0.7px 0 0 #fff"></div>
<div style="left:145.80px;top:184.00px;width:1.00px;height:9.80px;background:#8a8a8a;box-shadow:0.7px 0 0 #fff"></div>
<div style="left:10.80px;top:194.20px;width:204.80px;height:69.10px;border-left:1px solid #fff;border-top:1px solid #fafafa;border-right:1px solid #a0a0a0;border-bottom:1px solid #a0a0a0;box-shadow:inset -0.6px -0.6px 0 #e0e0e0, -0.6px 0 0 #c8c8c8;box-sizing:border-box"></div>
<div class="t" style="left:13.90px;transform-origin:0 50%;top:200.60px;height:8px;line-height:8px;font-size:6.893px;color:#000;transform:scaleX(0.8197);">Source</div>
<div style="left:40.60px;top:198.60px;width:170.10px;height:10.00px;background:#fff;border-top:1.1px solid #767676;border-left:1.1px solid #767676;border-right:1px solid #fcfcfc;border-bottom:1px solid #fcfcfc;box-shadow:-0.5px -0.5px 0 #c4c4c4;box-sizing:border-box;"></div>
<div class="t" style="left:42.90px;transform-origin:0 50%;top:200.60px;height:8px;line-height:8px;font-size:6.893px;color:#000;transform:scaleX(0.8197);">Generator frequency (both channels)</div>
<div style="left:200.70px;top:200.20px;width:9.60px;height:7.80px;background:#f0f0f0;border-top:0.6px solid #fafafa;border-left:0.6px solid #fafafa;border-right:1px solid #858585;border-bottom:1px solid #858585;box-sizing:border-box;"></div>
<svg class="a" style="left:203.00px;top:202.20px" width="5" height="3"><path d="M0.3 0.4H4.7L2.5 2.8Z" fill="#000"/></svg>
<div class="t" style="left:13.90px;transform-origin:0 50%;top:213.20px;height:8px;line-height:8px;font-size:6.893px;color:#000;transform:scaleX(0.8197);">Start</div>
<div style="left:40.60px;top:210.90px;width:38.80px;height:10.60px;background:#fff;border-top:1.1px solid #767676;border-left:1.1px solid #767676;border-right:1px solid #fcfcfc;border-bottom:1px solid #fcfcfc;box-shadow:-0.5px -0.5px 0 #c4c4c4;box-sizing:border-box;"></div>
<div class="t" style="left:42.50px;transform-origin:0 50%;top:213.20px;height:8px;line-height:8px;font-size:6.893px;color:#000;transform:scaleX(0.8197);">20000.000</div>
<div class="t" style="left:94.00px;transform-origin:0 50%;top:213.20px;height:8px;line-height:8px;font-size:6.893px;color:#000;transform:scaleX(0.8197);">Stop</div>
<div style="left:111.20px;top:210.90px;width:37.00px;height:10.60px;background:#fff;border-top:1.1px solid #767676;border-left:1.1px solid #767676;border-right:1px solid #fcfcfc;border-bottom:1px solid #fcfcfc;box-shadow:-0.5px -0.5px 0 #c4c4c4;box-sizing:border-box;"></div>
<div class="t" style="left:113.10px;transform-origin:0 50%;top:213.20px;height:8px;line-height:8px;font-size:6.893px;color:#000;transform:scaleX(0.8197);">20.000</div>
<div style="left:168.60px;top:211.10px;width:42.10px;height:10.40px;background:#fff;border-top:1.1px solid #767676;border-left:1.1px solid #767676;border-right:1px solid #fcfcfc;border-bottom:1px solid #fcfcfc;box-shadow:-0.5px -0.5px 0 #c4c4c4;box-sizing:border-box;"></div>
<div class="t" style="left:170.90px;transform-origin:0 50%;top:213.30px;height:8px;line-height:8px;font-size:6.893px;color:#000;transform:scaleX(0.8197);">Hz</div>
<div style="left:200.70px;top:212.70px;width:9.60px;height:8.20px;background:#f0f0f0;border-top:0.6px solid #fafafa;border-left:0.6px solid #fafafa;border-right:1px solid #858585;border-bottom:1px solid #858585;box-sizing:border-box;"></div>
<svg class="a" style="left:203.00px;top:214.90px" width="5" height="3"><path d="M0.3 0.4H4.7L2.5 2.8Z" fill="#000"/></svg>
<div class="t" style="left:13.90px;transform-origin:0 50%;top:225.50px;height:8px;line-height:8px;font-size:6.893px;color:#000;transform:scaleX(0.8197);">Interval</div>
<div style="left:40.60px;top:223.40px;width:47.70px;height:10.30px;background:#fff;border-top:1.1px solid #767676;border-left:1.1px solid #767676;border-right:1px solid #fcfcfc;border-bottom:1px solid #fcfcfc;box-shadow:-0.5px -0.5px 0 #c4c4c4;box-sizing:border-box;"></div>
<div class="t" style="left:42.90px;transform-origin:0 50%;top:225.55px;height:8px;line-height:8px;font-size:6.893px;color:#000;transform:scaleX(0.8197);">Logarithmic</div>
<div style="left:78.30px;top:225.00px;width:9.60px;height:8.10px;background:#f0f0f0;border-top:0.6px solid #fafafa;border-left:0.6px solid #fafafa;border-right:1px solid #858585;border-bottom:1px solid #858585;box-sizing:border-box;"></div>
<svg class="a" style="left:80.60px;top:227.15px" width="5" height="3"><path d="M0.3 0.4H4.7L2.5 2.8Z" fill="#000"/></svg>
<div class="t" style="left:94.00px;transform-origin:0 50%;top:225.50px;height:8px;line-height:8px;font-size:6.893px;color:#000;transform:scaleX(0.8197);">Factor</div>
<div style="left:111.20px;top:223.40px;width:37.00px;height:10.30px;background:#fff;border-top:1.1px solid #767676;border-left:1.1px solid #767676;border-right:1px solid #fcfcfc;border-bottom:1px solid #fcfcfc;box-shadow:-0.5px -0.5px 0 #c4c4c4;box-sizing:border-box;"></div>
<div class="t" style="left:113.10px;transform-origin:0 50%;top:225.55px;height:8px;line-height:8px;font-size:6.893px;color:#000;transform:scaleX(0.8197);">0.708</div>
<div class="t" style="left:167.30px;transform-origin:0 50%;top:225.50px;height:8px;line-height:8px;font-size:6.893px;color:#000;transform:scaleX(0.8197);">No. steps:</div>
<div style="left:194.60px;top:223.40px;width:16.10px;height:10.30px;background:#fff;border-top:1.1px solid #767676;border-left:1.1px solid #767676;border-right:1px solid #fcfcfc;border-bottom:1px solid #fcfcfc;box-shadow:-0.5px -0.5px 0 #c4c4c4;box-sizing:border-box;"></div>
<div class="t" style="left:196.50px;transform-origin:0 50%;top:225.55px;height:8px;line-height:8px;font-size:6.893px;color:#000;transform:scaleX(0.8197);">20</div>
<div style="left:15.30px;top:238.80px;width:6.40px;height:6.40px;background:#fff;border-top:0.9px solid #777;border-left:0.9px solid #777;border-right:0.9px solid #d8d8d8;border-bottom:0.9px solid #d8d8d8;box-sizing:border-box;"></div>
<div class="t" style="left:24.70px;transform-origin:0 50%;top:238.70px;height:8px;line-height:8px;font-size:6.893px;color:#000;transform:scaleX(0.8197);">Run script</div>
<div style="left:54.20px;top:236.30px;width:83.30px;height:10.50px;background:#f0f0f0;border-top:1.1px solid #767676;border-left:1.1px solid #767676;border-right:1px solid #fcfcfc;border-bottom:1px solid #fcfcfc;box-shadow:-0.5px -0.5px 0 #c4c4c4;box-sizing:border-box;"></div>
<div style="left:138.00px;top:236.90px;width:8.40px;height:9.70px;background:#f0f0f0;border-top:1px solid #fff;border-left:1px solid #fff;border-right:1px solid #a0a0a0;border-bottom:1px solid #a0a0a0;box-shadow:0.6px 0.6px 0 #696969;box-sizing:border-box;"></div>
<div class="t" style="left:42.20px;width:200px;text-align:center;transform-origin:50% 50%;top:238.55px;height:8px;line-height:8px;font-size:6.893px;color:#a0a0a0;transform:scaleX(0.8197);">&gt;&gt;</div>
<div style="left:147.80px;top:236.30px;width:62.90px;height:10.50px;background:#f0f0f0;border-top:1.1px solid #767676;border-left:1.1px solid #767676;border-right:1px solid #fcfcfc;border-bottom:1px solid #fcfcfc;box-shadow:-0.5px -0.5px 0 #c4c4c4;box-sizing:border-box;"></div>
<div class="t" style="left:150.10px;transform-origin:0 50%;top:238.55px;height:8px;line-height:8px;font-size:6.893px;color:#a0a0a0;transform:scaleX(0.8197);">At start of step</div>
<div style="left:200.70px;top:237.90px;width:9.60px;height:8.30px;background:#f0f0f0;border-top:0.6px solid #fafafa;border-left:0.6px solid #fafafa;border-right:1px solid #858585;border-bottom:1px solid #858585;box-sizing:border-box;"></div>
<svg class="a" style="left:203.00px;top:240.15px" width="5" height="3"><path d="M0.3 0.4H4.7L2.5 2.8Z" fill="#a0a0a0"/></svg>
<div style="left:15.30px;top:251.60px;width:6.40px;height:6.40px;background:#fff;border-top:0.9px solid #777;border-left:0.9px solid #777;border-right:0.9px solid #d8d8d8;border-bottom:0.9px solid #d8d8d8;box-sizing:border-box;"></div>
<div class="t" style="left:24.70px;transform-origin:0 50%;top:251.60px;height:8px;line-height:8px;font-size:6.893px;color:#000;transform:scaleX(0.8197);">Regulate at each step</div>
<div style="left:86.00px;top:249.70px;width:39.30px;height:10.60px;background:#f0f0f0;border-top:1px solid #fff;border-left:1px solid #fff;border-right:1px solid #a0a0a0;border-bottom:1px solid #a0a0a0;box-shadow:0.6px 0.6px 0 #696969;box-sizing:border-box;"></div>
<div class="t" style="left:5.65px;width:200px;text-align:center;transform-origin:50% 50%;top:251.80px;height:8px;line-height:8px;font-size:6.893px;color:#000;transform:scaleX(0.8197);">Regulation &gt;&gt;</div>
<div style="left:167.30px;top:249.70px;width:44.50px;height:10.60px;background:#f0f0f0;border-top:1px solid #fff;border-left:1px solid #fff;border-right:1px solid #a0a0a0;border-bottom:1px solid #a0a0a0;box-shadow:0.6px 0.6px 0 #696969;box-sizing:border-box;"></div>
<div class="t" style="left:89.55px;width:200px;text-align:center;transform-origin:50% 50%;top:251.80px;height:8px;line-height:8px;font-size:6.893px;color:#000;transform:scaleX(0.8197);">Setting &gt;&gt;</div>
<div style="left:99.80px;top:287.00px;width:139.60px;height:102.30px;background:linear-gradient(#dde7f1 0px,#bccddf 1.6px,#c9d9ea 7.7px,#d9e7f4 17.1px) 0 0/100% 17.1px no-repeat,#d3e3f3;border:1px solid #7f8790;border-radius:3px 3px 0 0;box-sizing:border-box;"></div>
<div style="left:104.30px;top:304.10px;width:130.70px;height:80.90px;background:#f0f0f0;border-top:1px solid #7a7a7a;border-left:1px solid #8f9aa6;border-right:1px solid #e4ecf4;border-bottom:1px solid #e4ecf4;box-sizing:border-box;"></div>
<svg class="a" style="left:104.20px;top:293.95px" width="10" height="8"><path d="M3.9 0.5L0.8 6.6H7.4Z" fill="#fff" stroke="#1a1a1a" stroke-width="0.95" stroke-linejoin="round"/><path d="M4.3 2.2L9.4 5.6" stroke="#d0209a" stroke-width="1.1"/><path d="M4.6 1.5L9.6 4.8" stroke="#3a3ac8" stroke-width="0.55"/></svg>
<div class="t" style="left:115.80px;transform-origin:0 50%;top:292.75px;height:9px;line-height:9px;font-size:7.000px;color:#5a6a80;transform:scaleX(0.8929);-webkit-text-stroke:0.03px #5a6a80;">Analogue Outputs</div>
<div style="left:183.20px;top:293.30px;width:16.00px;height:9.30px;background:linear-gradient(#d9e5f1,#d2dfed);border:1px solid #a6b7cc;border-radius:2px;box-sizing:border-box;"></div>
<div style="left:188.30px;top:297.95px;width:5.80px;height:2.00px;background:#f2f3f5;box-shadow:0 0 0 0.55px #7a7a7a;border-radius:1px"></div>
<div style="left:201.10px;top:293.30px;width:15.50px;height:9.30px;background:linear-gradient(#d9e5f1,#d2dfed);border:1px solid #a6b7cc;border-radius:2px;box-sizing:border-box;"></div>
<div style="left:206.15px;top:295.35px;width:5.40px;height:4.90px;background:#e4eaf0;border:0.7px solid #707070;border-top-width:1.2px;box-sizing:border-box;"></div>
<div style="left:207.65px;top:297.05px;width:2.40px;height:1.80px;background:#9aa6b4;"></div>
<div style="left:218.50px;top:293.30px;width:16.00px;height:9.30px;background:linear-gradient(#d9e5f1,#d2dfed);border:1px solid #a6b7cc;border-radius:2px;box-sizing:border-box;"></div>
<svg class="a" style="left:222.90px;top:294.75px" width="7.2" height="6.4"><path d="M1.2 1L6 5.4M6 1L1.2 5.4" stroke="#80868e" stroke-width="1.9"/><path d="M1.2 1L6 5.4M6 1L1.2 5.4" stroke="#f4f6f8" stroke-width="0.6"/></svg>
<div style="left:108.30px;top:309.00px;width:29.00px;height:12.20px;background:#f0f0f0;border-top:1px solid #fff;border-left:1px solid #fff;border-right:1px solid #a0a0a0;border-bottom:1px solid #a0a0a0;box-shadow:0.6px 0.6px 0 #696969;box-sizing:border-box;"></div>
<div class="t" style="left:22.80px;width:200px;text-align:center;transform-origin:50% 50%;top:311.90px;height:8px;line-height:8px;font-size:6.893px;color:#000;transform:scaleX(0.8197);">Channel A</div>
<div style="left:138.00px;top:309.00px;width:64.90px;height:12.20px;background:#f0f0f0;border-top:1px solid #fff;border-left:1px solid #fff;border-right:1px solid #a0a0a0;border-bottom:1px solid #a0a0a0;box-shadow:0.6px 0.6px 0 #696969;box-sizing:border-box;"></div>
<div class="t" style="left:70.45px;width:200px;text-align:center;transform-origin:50% 50%;top:311.90px;height:8px;line-height:8px;font-size:6.893px;color:#000;transform:scaleX(0.8197);">Mute Analogue Outputs</div>
<div style="left:203.80px;top:309.00px;width:29.50px;height:12.20px;background:#f0f0f0;border-top:1px solid #fff;border-left:1px solid #fff;border-right:1px solid #a0a0a0;border-bottom:1px solid #a0a0a0;box-shadow:0.6px 0.6px 0 #696969;box-sizing:border-box;"></div>
<div class="t" style="left:118.55px;width:200px;text-align:center;transform-origin:50% 50%;top:311.90px;height:8px;line-height:8px;font-size:6.893px;color:#000;transform:scaleX(0.8197);">Channel B</div>
<div class="t" style="left:70.80px;width:200px;text-align:center;transform-origin:50% 50%;top:325.50px;height:8px;line-height:8px;font-size:6.893px;color:#000;transform:scaleX(0.8197);">Analogue Outputs ON</div>
<div class="t" style="left:108.30px;transform-origin:0 50%;top:338.70px;height:8px;line-height:8px;font-size:6.893px;color:#000;transform:scaleX(0.8197);">Output</div>
<div style="left:143.00px;top:337.20px;width:88.70px;height:9.80px;background:#fff;border-top:1.1px solid #767676;border-left:1.1px solid #767676;border-right:1px solid #fcfcfc;border-bottom:1px solid #fcfcfc;box-shadow:-0.5px -0.5px 0 #c4c4c4;box-sizing:border-box;"></div>
<div class="t" style="left:145.30px;transform-origin:0 50%;top:339.10px;height:8px;line-height:8px;font-size:6.893px;color:#000;transform:scaleX(0.8197);">Balanced normal</div>
<div style="left:221.70px;top:338.80px;width:9.60px;height:7.60px;background:#f0f0f0;border-top:0.6px solid #fafafa;border-left:0.6px solid #fafafa;border-right:1px solid #858585;border-bottom:1px solid #858585;box-sizing:border-box;"></div>
<svg class="a" style="left:224.00px;top:340.70px" width="5" height="3"><path d="M0.3 0.4H4.7L2.5 2.8Z" fill="#000"/></svg>
<div class="t" style="left:108.30px;transform-origin:0 50%;top:351.20px;height:8px;line-height:8px;font-size:6.893px;color:#000;transform:scaleX(0.8197);">Impedance</div>
<div style="left:143.00px;top:349.40px;width:88.70px;height:9.70px;background:#fff;border-top:1.1px solid #767676;border-left:1.1px solid #767676;border-right:1px solid #fcfcfc;border-bottom:1px solid #fcfcfc;box-shadow:-0.5px -0.5px 0 #c4c4c4;box-sizing:border-box;"></div>
<div class="t" style="left:145.30px;transform-origin:0 50%;top:351.25px;height:8px;line-height:8px;font-size:6.893px;color:#000;transform:scaleX(0.8197);">50R</div>
<div style="left:221.70px;top:351.00px;width:9.60px;height:7.50px;background:#f0f0f0;border-top:0.6px solid #fafafa;border-left:0.6px solid #fafafa;border-right:1px solid #858585;border-bottom:1px solid #858585;box-sizing:border-box;"></div>
<svg class="a" style="left:224.00px;top:352.85px" width="5" height="3"><path d="M0.3 0.4H4.7L2.5 2.8Z" fill="#000"/></svg>
<div class="t" style="left:108.30px;transform-origin:0 50%;top:363.60px;height:8px;line-height:8px;font-size:6.893px;color:#000;transform:scaleX(0.8197);">Grounding</div>
<div style="left:143.00px;top:361.80px;width:88.70px;height:9.70px;background:#fff;border-top:1.1px solid #767676;border-left:1.1px solid #767676;border-right:1px solid #fcfcfc;border-bottom:1px solid #fcfcfc;box-shadow:-0.5px -0.5px 0 #c4c4c4;box-sizing:border-box;"></div>
<div class="t" style="left:145.30px;transform-origin:0 50%;top:363.65px;height:8px;line-height:8px;font-size:6.893px;color:#000;transform:scaleX(0.8197);">Floating</div>
<div style="left:221.70px;top:363.40px;width:9.60px;height:7.50px;background:#f0f0f0;border-top:0.6px solid #fafafa;border-left:0.6px solid #fafafa;border-right:1px solid #858585;border-bottom:1px solid #858585;box-sizing:border-box;"></div>
<svg class="a" style="left:224.00px;top:365.25px" width="5" height="3"><path d="M0.3 0.4H4.7L2.5 2.8Z" fill="#000"/></svg>
<div class="t" style="left:69.60px;width:200px;text-align:center;transform-origin:50% 50%;top:375.80px;height:8px;line-height:8px;font-size:6.893px;color:#000;transform:scaleX(0.8197);">To change sample rate, use Analogue Inputs</div>
<div style="left:63.20px;top:400.40px;width:163.70px;height:99.00px;background:linear-gradient(#dde7f1 0px,#bccddf 1.6px,#c9d9ea 7.2px,#d9e7f4 16.0px) 0 0/100% 16.0px no-repeat,#d3e3f3;border:1px solid #7f8790;border-radius:3px 3px 0 0;box-sizing:border-box;"></div>
<div style="left:67.30px;top:416.40px;width:155.30px;height:78.60px;background:#f0f0f0;border-top:1px solid #7a7a7a;border-left:1px solid #8f9aa6;border-right:1px solid #e4ecf4;border-bottom:1px solid #e4ecf4;box-sizing:border-box;"></div>
<svg class="a" style="left:67.60px;top:406.80px" width="10" height="8"><path d="M3.9 0.5L0.8 6.6H7.4Z" fill="#fff" stroke="#1a1a1a" stroke-width="0.95" stroke-linejoin="round"/><path d="M4.3 2.2L9.4 5.6" stroke="#d0209a" stroke-width="1.1"/><path d="M4.6 1.5L9.6 4.8" stroke="#3a3ac8" stroke-width="0.55"/></svg>
<div class="t" style="left:79.30px;transform-origin:0 50%;top:405.60px;height:9px;line-height:9px;font-size:7.000px;color:#5a6a80;transform:scaleX(0.8929);-webkit-text-stroke:0.03px #5a6a80;">Analogue Inputs</div>
<div style="left:170.30px;top:405.30px;width:16.00px;height:9.30px;background:linear-gradient(#d9e5f1,#d2dfed);border:1px solid #a6b7cc;border-radius:2px;box-sizing:border-box;"></div>
<div style="left:175.40px;top:409.95px;width:5.80px;height:2.00px;background:#f2f3f5;box-shadow:0 0 0 0.55px #7a7a7a;border-radius:1px"></div>
<div style="left:188.20px;top:405.30px;width:15.50px;height:9.30px;background:linear-gradient(#d9e5f1,#d2dfed);border:1px solid #a6b7cc;border-radius:2px;box-sizing:border-box;"></div>
<div style="left:193.25px;top:407.35px;width:5.40px;height:4.90px;background:#e4eaf0;border:0.7px solid #707070;border-top-width:1.2px;box-sizing:border-box;"></div>
<div style="left:194.75px;top:409.05px;width:2.40px;height:1.80px;background:#9aa6b4;"></div>
<div style="left:205.60px;top:405.30px;width:16.00px;height:9.30px;background:linear-gradient(#d9e5f1,#d2dfed);border:1px solid #a6b7cc;border-radius:2px;box-sizing:border-box;"></div>
<svg class="a" style="left:210.00px;top:406.75px" width="7.2" height="6.4"><path d="M1.2 1L6 5.4M6 1L1.2 5.4" stroke="#80868e" stroke-width="1.9"/><path d="M1.2 1L6 5.4M6 1L1.2 5.4" stroke="#f4f6f8" stroke-width="0.6"/></svg>
<div class="t" style="left:71.80px;transform-origin:0 50%;top:423.10px;height:8px;line-height:8px;font-size:6.893px;color:#000;transform:scaleX(0.8197);">Source</div>
<div style="left:122.50px;top:420.30px;width:97.50px;height:10.30px;background:#fff;border-top:1.1px solid #767676;border-left:1.1px solid #767676;border-right:1px solid #fcfcfc;border-bottom:1px solid #fcfcfc;box-shadow:-0.5px -0.5px 0 #c4c4c4;box-sizing:border-box;"></div>
<div class="t" style="left:124.80px;transform-origin:0 50%;top:422.45px;height:8px;line-height:8px;font-size:6.893px;color:#000;transform:scaleX(0.8197);">Balanced/unbalanced</div>
<div style="left:210.00px;top:421.90px;width:9.60px;height:8.10px;background:#f0f0f0;border-top:0.6px solid #fafafa;border-left:0.6px solid #fafafa;border-right:1px solid #858585;border-bottom:1px solid #858585;box-sizing:border-box;"></div>
<svg class="a" style="left:212.30px;top:424.05px" width="5" height="3"><path d="M0.3 0.4H4.7L2.5 2.8Z" fill="#000"/></svg>
<div class="t" style="left:71.80px;transform-origin:0 50%;top:435.30px;height:8px;line-height:8px;font-size:6.893px;color:#000;transform:scaleX(0.8197);">Sample rate</div>
<div style="left:122.50px;top:433.20px;width:97.50px;height:9.90px;background:#fff;border-top:1.1px solid #767676;border-left:1.1px solid #767676;border-right:1px solid #fcfcfc;border-bottom:1px solid #fcfcfc;box-shadow:-0.5px -0.5px 0 #c4c4c4;box-sizing:border-box;"></div>
<div class="t" style="left:124.80px;transform-origin:0 50%;top:435.15px;height:8px;line-height:8px;font-size:6.893px;color:#000;transform:scaleX(0.8197);">96kHz (internal)</div>
<div style="left:210.00px;top:434.80px;width:9.60px;height:7.70px;background:#f0f0f0;border-top:0.6px solid #fafafa;border-left:0.6px solid #fafafa;border-right:1px solid #858585;border-bottom:1px solid #858585;box-sizing:border-box;"></div>
<svg class="a" style="left:212.30px;top:436.75px" width="5" height="3"><path d="M0.3 0.4H4.7L2.5 2.8Z" fill="#000"/></svg>
<div class="t" style="left:71.80px;transform-origin:0 50%;top:447.20px;height:8px;line-height:8px;font-size:6.893px;color:#000;transform:scaleX(0.8197);">Input impedance</div>
<div style="left:122.50px;top:445.10px;width:97.50px;height:10.30px;background:#fff;border-top:1.1px solid #767676;border-left:1.1px solid #767676;border-right:1px solid #fcfcfc;border-bottom:1px solid #fcfcfc;box-shadow:-0.5px -0.5px 0 #c4c4c4;box-sizing:border-box;"></div>
<div class="t" style="left:124.80px;transform-origin:0 50%;top:447.25px;height:8px;line-height:8px;font-size:6.893px;color:#000;transform:scaleX(0.8197);">150R</div>
<div style="left:210.00px;top:446.70px;width:9.60px;height:8.10px;background:#f0f0f0;border-top:0.6px solid #fafafa;border-left:0.6px solid #fafafa;border-right:1px solid #858585;border-bottom:1px solid #858585;box-sizing:border-box;"></div>
<svg class="a" style="left:212.30px;top:448.85px" width="5" height="3"><path d="M0.3 0.4H4.7L2.5 2.8Z" fill="#000"/></svg>
<div class="t" style="left:71.80px;transform-origin:0 50%;top:460.20px;height:8px;line-height:8px;font-size:6.893px;color:#000;transform:scaleX(0.8197);">Range:</div>
<div class="t" style="left:107.50px;transform-origin:0 50%;top:460.20px;height:8px;line-height:8px;font-size:6.893px;color:#000;transform:scaleX(0.8197);">Ch A</div>
<div style="left:122.50px;top:458.00px;width:14.70px;height:9.90px;background:#f0f0f0;border-top:1.1px solid #767676;border-left:1.1px solid #767676;border-right:1px solid #fcfcfc;border-bottom:1px solid #fcfcfc;box-shadow:-0.5px -0.5px 0 #c4c4c4;box-sizing:border-box;"></div>
<div class="t" style="left:-64.80px;width:200px;text-align:right;transform-origin:100% 50%;top:459.95px;height:8px;line-height:8px;font-size:6.893px;color:#a0a0a0;transform:scaleX(0.8197);">10</div>
<div class="t" style="left:140.20px;transform-origin:0 50%;top:460.20px;height:8px;line-height:8px;font-size:6.893px;color:#000;transform:scaleX(0.8197);">Ch B</div>
<div style="left:155.60px;top:458.00px;width:15.30px;height:9.90px;background:#f0f0f0;border-top:1.1px solid #767676;border-left:1.1px solid #767676;border-right:1px solid #fcfcfc;border-bottom:1px solid #fcfcfc;box-shadow:-0.5px -0.5px 0 #c4c4c4;box-sizing:border-box;"></div>
<div class="t" style="left:-31.10px;width:200px;text-align:right;transform-origin:100% 50%;top:459.95px;height:8px;line-height:8px;font-size:6.893px;color:#a0a0a0;transform:scaleX(0.8197);">10</div>
<div class="t" style="left:173.80px;transform-origin:0 50%;top:460.20px;height:8px;line-height:8px;font-size:6.893px;color:#000;transform:scaleX(0.8197);">dBu</div>
<div style="left:192.70px;top:460.60px;width:6.40px;height:6.40px;background:#fff;border-top:0.9px solid #777;border-left:0.9px solid #777;border-right:0.9px solid #d8d8d8;border-bottom:0.9px solid #d8d8d8;box-sizing:border-box;"></div>
<div class="t" style="left:203.00px;transform-origin:0 50%;top:459.90px;height:8px;line-height:8px;font-size:6.893px;color:#a0a0a0;transform:scaleX(0.8197);">Tied</div>
<div class="t" style="left:71.80px;transform-origin:0 50%;top:472.60px;height:8px;line-height:8px;font-size:6.893px;color:#000;transform:scaleX(0.8197);">Step size:</div>
<div style="left:122.50px;top:470.40px;width:67.20px;height:9.80px;background:#fff;border-top:1.1px solid #767676;border-left:1.1px solid #767676;border-right:1px solid #fcfcfc;border-bottom:1px solid #fcfcfc;box-shadow:-0.5px -0.5px 0 #c4c4c4;box-sizing:border-box;"></div>
<div class="t" style="left:124.80px;transform-origin:0 50%;top:472.30px;height:8px;line-height:8px;font-size:6.893px;color:#000;transform:scaleX(0.8197);">Fine (2dB)</div>
<div style="left:179.70px;top:472.00px;width:9.60px;height:7.60px;background:#f0f0f0;border-top:0.6px solid #fafafa;border-left:0.6px solid #fafafa;border-right:1px solid #858585;border-bottom:1px solid #858585;box-sizing:border-box;"></div>
<svg class="a" style="left:182.00px;top:473.90px" width="5" height="3"><path d="M0.3 0.4H4.7L2.5 2.8Z" fill="#000"/></svg>
<div style="left:192.70px;top:472.80px;width:6.40px;height:6.40px;background:#fff;border-top:0.9px solid #777;border-left:0.9px solid #777;border-right:0.9px solid #d8d8d8;border-bottom:0.9px solid #d8d8d8;box-sizing:border-box;"></div>
<svg class="a" style="left:192.70px;top:472.80px" width="6.4" height="6.4"><path d="M1.2 2.9L2.6 4.5L5.1 1.4" stroke="#000" stroke-width="1.25" fill="none"/></svg>
<div class="t" style="left:202.60px;transform-origin:0 50%;top:472.60px;height:8px;line-height:8px;font-size:6.893px;color:#000;transform:scaleX(0.8197);">Auto</div>
<div style="left:252.80px;top:60.40px;width:696.50px;height:454.60px;background:linear-gradient(#c9dbee 0px,#93b1d2 1.6px,#a2bedc 7.1px,#b6d1ea 15.8px) 0 0/100% 15.8px no-repeat,#bdd7ef;border-top:1px solid #686868;border-left:1px solid #7c7c7c;border-right:1px solid #3a8ea6;border-bottom:1.2px solid #1b555d;border-radius:3px 3px 0 0;box-sizing:border-box;"></div>
<div style="left:257.30px;top:76.20px;width:687.70px;height:434.10px;background:#f0f0f0;border-top:1px solid #7a7a7a;border-left:1px solid #8f9aa6;border-right:1px solid #e4ecf4;border-bottom:1px solid #e4ecf4;box-sizing:border-box;"></div>
<div class="t" style="left:269.00px;transform-origin:0 50%;top:65.50px;height:9px;line-height:9px;font-size:7.123px;color:#1e1e1e;transform:scaleX(0.8929);-webkit-text-stroke:0.03px #1e1e1e;">Trace window</div>
<div style="left:892.50px;top:65.50px;width:16.00px;height:9.30px;background:linear-gradient(#d8e7f6,#c9dcf0 45%,#a9c4e2 55%,#bbd2eb);border:1px solid #6d84a6;border-radius:2px;box-sizing:border-box;"></div>
<div style="left:897.50px;top:71.05px;width:6.00px;height:1.80px;background:#fafafa;box-shadow:0 0 0 0.6px #3a3a3a;border-radius:0.8px"></div>
<div style="left:910.40px;top:65.50px;width:15.50px;height:9.30px;background:linear-gradient(#d8e7f6,#c9dcf0 45%,#a9c4e2 55%,#bbd2eb);border:1px solid #6d84a6;border-radius:2px;box-sizing:border-box;"></div>
<div style="left:915.65px;top:67.55px;width:5.00px;height:4.70px;background:#fff;border:0.8px solid #3a3a3a;border-top-width:1.2px;box-sizing:border-box;"></div>
<div style="left:917.25px;top:69.45px;width:1.80px;height:1.30px;background:#7a98c0;"></div>
<div style="left:927.80px;top:65.50px;width:16.00px;height:9.30px;background:linear-gradient(#eba592,#de806a 45%,#c8462a 55%,#d65c3e);border:1px solid #6e3434;border-radius:2px;box-sizing:border-box;"></div>
<svg class="a" style="left:932.00px;top:66.95px" width="7.6" height="6.4"><path d="M1.2 1L6.4 5.4M6.4 1L1.2 5.4" stroke="#5a2a2a" stroke-width="2.4" stroke-linecap="round" opacity="0.55"/><path d="M1.2 1L6.4 5.4M6.4 1L1.2 5.4" stroke="#fff" stroke-width="1.5"/></svg>
<svg class="a" style="left:258.60px;top:66.40px" width="7.5" height="7" viewBox="0 0 7.5 7"><rect x="0.2" y="0.2" width="7" height="6.6" fill="#5a3a20"/><rect x="0.9" y="0.9" width="5.6" height="5.2" fill="#c03020"/><path d="M1 6L3 2.5L4.5 4.5L6.5 1" stroke="#20c020" stroke-width="0.9" fill="none"/></svg>
<div style="left:257.30px;top:76.20px;width:687.70px;height:0.90px;background:#9ea4ac"></div>
<div style="left:257.30px;top:77.10px;width:687.70px;height:15.90px;background:linear-gradient(#ffffff,#f8f9fc 25%,#e4e8f4 50%,#dadff0 75%,#d8ddee)"></div>
<div style="left:257.30px;top:77.10px;width:363.70px;height:15.90px;background:linear-gradient(#fcfcfc,#f4f4f4 40%,#eeeeee)"></div>
<div style="left:621.00px;top:77.10px;width:0.80px;height:15.90px;background:#d4d6dc"></div>
<svg class="a" style="left:261.30px;top:79.80px" width="9.5" height="9" viewBox="0 0 9.5 9"><path d="M0.6 7C1.8 3.5 3 3.5 4.5 6.2C5.8 8.5 7 7 8.6 5" stroke="#10a010" stroke-width="1.3" fill="none"/><path d="M6.3 0.6V4.4M4.4 2.5H8.2" stroke="#2030e0" stroke-width="1"/></svg>
<svg class="a" style="left:273.80px;top:79.80px" width="9.5" height="9" viewBox="0 0 9.5 9"><path d="M0.6 7C1.8 3.5 3 3.5 4.5 6.2C5.8 8.5 7 7 8.6 5" stroke="#10a010" stroke-width="1.3" fill="none"/><path d="M4.6 2.5H8.6" stroke="#2030e0" stroke-width="1"/></svg>
<svg class="a" style="left:286.30px;top:79.80px" width="9" height="9" viewBox="0 0 9 9"><rect x="0.5" y="0.5" width="8" height="8" fill="#3a3010" stroke="#4a4010" stroke-width="0.6"/><path d="M1.2 1.2H7.8V4L1.2 6Z" fill="#c8c8b8"/><path d="M0.6 7C1.8 3.5 3 3.5 4.5 6.2C5.8 8.5 7 7 8.6 5" stroke="#10a010" stroke-width="1.3" fill="none"/></svg>
<svg class="a" style="left:298.80px;top:79.80px" width="9.5" height="9" viewBox="0 0 9.5 9"><path d="M0.6 0.6H2.6L3.4 1.4V6.4H0.6Z" fill="#c8c8c8" stroke="#555" stroke-width="0.6"/><path d="M3.4 2.8H6.4L8.2 4.6V8.4H3.4Z" fill="#c0c0c0" stroke="#4040b0" stroke-width="0.8"/></svg>
<div style="left:311.20px;top:78.50px;width:0.80px;height:12.00px;background:#cfd2d8"></div>
<div style="left:314.40px;top:77.80px;width:11.10px;height:13.40px;background:#f6f6f6;border-top:1px solid #c4c4c4;border-left:1px solid #c4c4c4;border-bottom:1px solid #fff;border-right:1px solid #fff;box-sizing:border-box"></div>
<svg class="a" style="left:316.00px;top:79.80px" width="9" height="9" viewBox="0 0 9 9"><rect x="0.3" y="0.3" width="8.4" height="8.4" fill="#2a3a2a"/><path d="M0.6 4C1.8 1 3 1 4.5 4C5.8 7 7 6 8.6 3" stroke="#18d018" stroke-width="1.2" fill="none"/><path d="M0.6 7C1.8 4 3 4 4.5 7C5.8 9 7 8 8.6 6" stroke="#18d018" stroke-width="1.0" fill="none"/></svg>
<svg class="a" style="left:327.00px;top:79.80px" width="9.5" height="9" viewBox="0 0 9.5 9"><circle cx="3.4" cy="3.4" r="2.8" fill="#8a8a80"/><path d="M6.5 1V8.6M0.8 8.2H8.5" stroke="#333" stroke-width="0.7" stroke-dasharray="0.8 0.8"/><path d="M2 3.5L3.5 2.5L5 3.8" stroke="#c8c020" stroke-width="0.6" fill="none"/><path d="M5.8 7.6L7.2 8.4L8.8 6" stroke="#10c010" stroke-width="1.3" fill="none"/></svg>
<div style="left:340.20px;top:78.50px;width:0.80px;height:12.00px;background:#cfd2d8"></div>
<svg class="a" style="left:343.30px;top:79.80px" width="9.5" height="9" viewBox="0 0 9.5 9"><rect x="0.5" y="2.5" width="6.5" height="6" fill="#7a7a9a" stroke="#c03030" stroke-width="0.8"/><path d="M4.5 5L8.8 0.5" stroke="#d8c020" stroke-width="1.2"/></svg>
<svg class="a" style="left:356.60px;top:79.80px" width="8" height="9" viewBox="0 0 8 9"><path d="M1.5 0.5V8.5M4 0.5V8.5M6.5 0.5V8.5" stroke="#333" stroke-width="0.7" stroke-dasharray="1 0.8"/></svg>
<div style="left:368.30px;top:78.50px;width:0.80px;height:12.00px;background:#cfd2d8"></div>
<svg class="a" style="left:372.20px;top:79.80px" width="9.5" height="9" viewBox="0 0 9.5 9"><path d="M0.5 0.8H8.8M0.5 8.2H8.8" stroke="#333" stroke-width="0.7"/><circle cx="4.6" cy="4.5" r="2.2" fill="#dfe8f0" stroke="#333" stroke-width="0.8"/><path d="M3 6.3L1.4 8" stroke="#333" stroke-width="1"/></svg>
<svg class="a" style="left:384.70px;top:79.80px" width="9.5" height="9" viewBox="0 0 9.5 9"><path d="M4 0.8H8.8M0.5 8.2H8.8" stroke="#333" stroke-width="0.7"/><circle cx="4.6" cy="4.5" r="2.2" fill="#dfe8f0" stroke="#333" stroke-width="0.8"/><path d="M3 6.3L1.4 8" stroke="#333" stroke-width="1"/></svg>
<svg class="a" style="left:396.40px;top:79.80px" width="9.5" height="9" viewBox="0 0 9.5 9"><path d="M0.8 0.5V8.5M8.5 0.5V8.5" stroke="#333" stroke-width="0.8"/><path d="M1 2L3 5L5 6.5L8.5 4" stroke="#10a010" stroke-width="1.2" fill="none"/></svg>
<div style="left:410.50px;top:78.50px;width:0.80px;height:12.00px;background:#cfd2d8"></div>
<svg class="a" style="left:413.10px;top:79.80px" width="9.5" height="9" viewBox="0 0 9.5 9"><path d="M1 5L3 1.5L5.5 4.5L8.5 1.5" stroke="#10a010" stroke-width="1.3" fill="none"/><path d="M0.8 0.5V8.5M0.8 8L3 8" stroke="#222" stroke-width="0.8"/></svg>
<svg class="a" style="left:425.60px;top:79.80px" width="9.5" height="9" viewBox="0 0 9.5 9"><path d="M1 5L3 1.5L5.5 4.5L8.5 1.5" stroke="#10a010" stroke-width="1.3" fill="none"/><path d="M4.5 4.5V8.5M3 7L4.5 8.5L6 7" stroke="#222" stroke-width="0.8" fill="none"/></svg>
<svg class="a" style="left:438.10px;top:79.80px" width="9.5" height="9" viewBox="0 0 9.5 9"><path d="M1 5L3 1.5L5.5 4.5L8.5 1.5" stroke="#10a010" stroke-width="1.3" fill="none"/><path d="M4.5 4.5V8.5M3 6L4.5 4.5L6 6" stroke="#222" stroke-width="0.8" fill="none"/></svg>
<svg class="a" style="left:450.60px;top:79.80px" width="9.5" height="9" viewBox="0 0 9.5 9"><path d="M1 5L3 1.5L5.5 4.5L8.5 1.5" stroke="#10a010" stroke-width="1.3" fill="none"/><path d="M8.5 0.5V8.5M6 8H8.5" stroke="#222" stroke-width="0.8"/></svg>
<div style="left:463.90px;top:78.50px;width:0.80px;height:12.00px;background:#cfd2d8"></div>
<svg class="a" style="left:467.00px;top:79.80px" width="9" height="9" viewBox="0 0 9 9"><circle cx="4" cy="3.5" r="2" fill="#e0f0f0" stroke="#333" stroke-width="0.8"/><path d="M2.6 5L1 8" stroke="#333" stroke-width="1"/><path d="M7.8 0.8H7V8.2H7.8" stroke="#333" stroke-width="0.7" fill="none"/></svg>
<svg class="a" style="left:478.80px;top:79.80px" width="9" height="9" viewBox="0 0 9 9"><circle cx="4" cy="3.5" r="2" fill="#e0f0f0" stroke="#333" stroke-width="0.8"/><path d="M2.6 5L1 8" stroke="#333" stroke-width="1"/><path d="M8.2 0.8H7.4V8.2H8.2" stroke="#333" stroke-width="0.7" fill="none"/></svg>
<svg class="a" style="left:491.30px;top:79.80px" width="9.5" height="9" viewBox="0 0 9.5 9"><path d="M0.5 1H8.8M0.5 8H8.8" stroke="#333" stroke-width="0.7"/><path d="M1 6L3.5 3.5L5.5 5.5L8.5 3.8" stroke="#10a010" stroke-width="1.2" fill="none"/></svg>
<div style="left:504.50px;top:78.50px;width:0.80px;height:12.00px;background:#cfd2d8"></div>
<svg class="a" style="left:507.70px;top:79.80px" width="10" height="9" viewBox="0 0 10 9"><path d="M0.5 1.5H8M0.5 1.5V8" stroke="#222" stroke-width="0.9"/><rect x="2" y="2.5" width="5" height="3" fill="#555"/><path d="M5 8.5C8 8.5 9 7 8.5 4.5M7 5.8L8.5 4.2L9.8 5.8" stroke="#2040f0" stroke-width="1" fill="none"/></svg>
<div style="left:521.00px;top:78.50px;width:0.80px;height:12.00px;background:#cfd2d8"></div>
<svg class="a" style="left:524.80px;top:79.80px" width="9" height="9" viewBox="0 0 9 9"><path d="M0.5 5.5L3 3L5.5 7L8.5 2.5" stroke="#10a010" stroke-width="1.3" fill="none"/><circle cx="3" cy="1.5" r="1" fill="#222"/></svg>
<svg class="a" style="left:536.60px;top:79.80px" width="9.5" height="9" viewBox="0 0 9.5 9"><path d="M0.5 2L4.5 6L8.8 1" stroke="#10a010" stroke-width="1.3" fill="none"/><path d="M4.5 6V8.8" stroke="#222" stroke-width="0.9"/></svg>
<div style="left:549.80px;top:78.50px;width:0.80px;height:12.00px;background:#cfd2d8"></div>
<svg class="a" style="left:553.00px;top:79.80px" width="9.5" height="9.5" viewBox="0 0 9.5 9.5"><path d="M4.5 0.5L5.5 3.5L8.5 4L5.5 5L4.5 8L3.5 5L0.5 4L3.5 3.5Z" fill="#c8b020" stroke="#6a6a10" stroke-width="0.5"/><text x="4.7" y="9.3" font-size="3.2" text-anchor="middle" fill="#e02020" font-family="Liberation Sans">0.00</text></svg>
<svg class="a" style="left:564.70px;top:79.80px" width="9.5" height="9" viewBox="0 0 9.5 9"><path d="M0.5 4.5H9M0.5 4.5L2.5 2.5M0.5 4.5L2.5 6.5M9 4.5L7 2.5M9 4.5L7 6.5" stroke="#222" stroke-width="0.9" fill="none"/><path d="M3.5 2V7M5.5 2V7" stroke="#10a010" stroke-width="0.9"/></svg>
<div style="left:578.70px;top:78.50px;width:0.80px;height:12.00px;background:#cfd2d8"></div>
<svg class="a" style="left:581.90px;top:79.80px" width="9.5" height="9" viewBox="0 0 9.5 9"><path d="M1 4L3.5 1L6 4L8.5 2.5" stroke="#b0b0b0" stroke-width="1.1" fill="none"/><path d="M2 8.5V5.5H7V8.5" stroke="#a0a0a0" stroke-width="0.8" fill="none"/></svg>
<svg class="a" style="left:594.40px;top:79.80px" width="9.5" height="9" viewBox="0 0 9.5 9"><path d="M0.5 1H8.8M0.5 8H8.8" stroke="#f04040" stroke-width="0.8"/><path d="M0.8 5L3 3.2L5.5 5.8L8.5 3.8" stroke="#10a010" stroke-width="1.3" fill="none"/></svg>
<svg class="a" style="left:606.90px;top:79.80px" width="9.5" height="9" viewBox="0 0 9.5 9"><path d="M2 0.5V8.5" stroke="#10a010" stroke-width="1"/><path d="M3 2.5H9M3 5H9M9 2.5L7.5 1.2M3 5L4.5 6.3" stroke="#2040f0" stroke-width="0.9" fill="none"/><path d="M0.5 7H6" stroke="#2040f0" stroke-width="0.9"/></svg>
<div style="left:257.60px;top:93.00px;width:560.60px;height:413.60px;background:#000"></div>
<div style="left:257.30px;top:506.70px;width:560.90px;height:3.60px;background:linear-gradient(#fafafa,#ffffff 50%,#d8d8d8)"></div>
<div style="left:818.20px;top:93.00px;width:126.80px;height:416.30px;background:#f0f0f0"></div>
<div style="left:818.20px;top:508.60px;width:126.80px;height:0.90px;background:#d4d4d4"></div>
<div style="left:260.80px;top:111.70px;width:3.90px;height:372.80px;background:#7f7f7f"></div>
<div style="left:261.20px;top:283.00px;width:3.10px;height:10.00px;background:#f8f800"></div>
<svg class="a" style="left:0;top:0" width="1024" height="555"><path d="M289 112.80H810.8" stroke="#686868" stroke-width="0.9" stroke-dasharray="2.4 1.9"/><path d="M289 139.35H810.8" stroke="#686868" stroke-width="0.9" stroke-dasharray="2.4 1.9"/><path d="M289 194.66H810.8" stroke="#686868" stroke-width="0.9" stroke-dasharray="2.4 1.9"/><path d="M289 249.97H810.8" stroke="#686868" stroke-width="0.9" stroke-dasharray="2.4 1.9"/><path d="M289 305.28H810.8" stroke="#686868" stroke-width="0.9" stroke-dasharray="2.4 1.9"/><path d="M289 360.59H810.8" stroke="#686868" stroke-width="0.9" stroke-dasharray="2.4 1.9"/><path d="M289 415.90H810.8" stroke="#686868" stroke-width="0.9" stroke-dasharray="2.4 1.9"/><path d="M289 471.21H810.8" stroke="#686868" stroke-width="0.9" stroke-dasharray="2.4 1.9"/><path d="M322.33 112.8V484.5" stroke="#5a5a5a" stroke-width="0.85" stroke-dasharray="1.3 0.55"/><path d="M343.93 112.8V484.5" stroke="#5a5a5a" stroke-width="0.85" stroke-dasharray="1.3 0.55"/><path d="M360.68 112.8V484.5" stroke="#5a5a5a" stroke-width="0.85" stroke-dasharray="1.3 0.55"/><path d="M374.36 112.8V484.5" stroke="#5a5a5a" stroke-width="0.85" stroke-dasharray="1.3 0.55"/><path d="M385.93 112.8V484.5" stroke="#5a5a5a" stroke-width="0.85" stroke-dasharray="1.3 0.55"/><path d="M395.95 112.8V484.5" stroke="#5a5a5a" stroke-width="0.85" stroke-dasharray="1.3 0.55"/><path d="M404.79 112.8V484.5" stroke="#5a5a5a" stroke-width="0.85" stroke-dasharray="1.3 0.55"/><path d="M412.70 112.8V487" stroke="#7c7c7c" stroke-width="0.9" stroke-dasharray="2.4 1.9"/><path d="M464.73 112.8V484.5" stroke="#5a5a5a" stroke-width="0.85" stroke-dasharray="1.3 0.55"/><path d="M495.16 112.8V484.5" stroke="#5a5a5a" stroke-width="0.85" stroke-dasharray="1.3 0.55"/><path d="M516.76 112.8V484.5" stroke="#5a5a5a" stroke-width="0.85" stroke-dasharray="1.3 0.55"/><path d="M533.51 112.8V484.5" stroke="#5a5a5a" stroke-width="0.85" stroke-dasharray="1.3 0.55"/><path d="M547.19 112.8V484.5" stroke="#5a5a5a" stroke-width="0.85" stroke-dasharray="1.3 0.55"/><path d="M558.76 112.8V484.5" stroke="#5a5a5a" stroke-width="0.85" stroke-dasharray="1.3 0.55"/><path d="M568.78 112.8V484.5" stroke="#5a5a5a" stroke-width="0.85" stroke-dasharray="1.3 0.55"/><path d="M577.62 112.8V484.5" stroke="#5a5a5a" stroke-width="0.85" stroke-dasharray="1.3 0.55"/><path d="M585.53 112.8V487" stroke="#7c7c7c" stroke-width="0.9" stroke-dasharray="2.4 1.9"/><path d="M637.56 112.8V484.5" stroke="#5a5a5a" stroke-width="0.85" stroke-dasharray="1.3 0.55"/><path d="M667.99 112.8V484.5" stroke="#5a5a5a" stroke-width="0.85" stroke-dasharray="1.3 0.55"/><path d="M689.59 112.8V484.5" stroke="#5a5a5a" stroke-width="0.85" stroke-dasharray="1.3 0.55"/><path d="M706.34 112.8V484.5" stroke="#5a5a5a" stroke-width="0.85" stroke-dasharray="1.3 0.55"/><path d="M720.02 112.8V484.5" stroke="#5a5a5a" stroke-width="0.85" stroke-dasharray="1.3 0.55"/><path d="M731.59 112.8V484.5" stroke="#5a5a5a" stroke-width="0.85" stroke-dasharray="1.3 0.55"/><path d="M741.61 112.8V484.5" stroke="#5a5a5a" stroke-width="0.85" stroke-dasharray="1.3 0.55"/><path d="M750.45 112.8V484.5" stroke="#5a5a5a" stroke-width="0.85" stroke-dasharray="1.3 0.55"/><path d="M758.36 112.8V487" stroke="#7c7c7c" stroke-width="0.9" stroke-dasharray="2.4 1.9"/><path d="M810.39 112.8V487" stroke="#7c7c7c" stroke-width="0.9" stroke-dasharray="2.4 1.9"/><path d="M810.39 112.8V487" stroke="#7c7c7c" stroke-width="0.9" stroke-dasharray="2.4 1.9"/><path d="M292 112V487.5" stroke="#5e5e5e" stroke-width="1"/><path d="M289 484.5H810.8" stroke="#8c8c8c" stroke-width="0.9"/><rect x="291.9" y="500.5" width="518.5" height="3.5" fill="#ffff00"/><polyline points="292.70,112.70 318.60,120.80 344.50,130.50 370.40,145.60 396.30,179.20 422.20,267.90 448.10,339.40 474.00,394.40 499.90,431.40 525.80,452.60 551.70,464.80 577.60,470.90 603.50,473.80 629.40,475.40 655.30,476.70 681.20,476.80 707.10,477.00 733.00,477.70 758.90,478.60 784.80,478.90 810.70,479.00" fill="none" stroke="#ff30ff" stroke-width="0.85"/><polyline points="292.30,112.20 318.20,120.30 344.10,130.00 370.00,145.10 395.90,178.70 421.80,267.40 447.70,338.90 473.60,393.90 499.50,430.90 525.40,452.10 551.30,464.30 577.20,470.40 603.10,473.30 629.00,474.90 654.90,476.20 680.80,476.30 706.70,476.50 732.60,477.20 758.50,478.10 784.40,478.40 810.30,478.50" fill="none" stroke="#ffff30" stroke-width="0.7" stroke-opacity="0.8"/><polyline points="525.50,452.20 551.40,464.40 577.30,470.50 603.20,473.40 629.10,475.00 655.00,476.30 680.90,476.40 706.80,476.60 732.70,477.30 758.60,478.20 784.50,478.50 810.40,478.60" fill="none" stroke="#c4c400" stroke-width="0.95"/><path d="M758.6 479.1L784.5 479.4" stroke="#e030e0" stroke-width="0.8"/><path d="M745 477.5L758.6 477.9" stroke="#f09070" stroke-width="0.9"/><path d="M630 474.6L637 474.7" stroke="#e030e0" stroke-width="0.8"/></svg>
<div class="t" style="left:86.30px;width:200px;text-align:right;transform-origin:100% 50%;top:101.40px;height:8px;line-height:8px;font-size:8.052px;color:#f0f028;transform:scaleX(0.8197);-webkit-text-stroke:0.14px #f0f028;">dBu</div>
<div class="t" style="left:86.30px;width:200px;text-align:right;transform-origin:100% 50%;top:109.40px;height:8px;line-height:8px;font-size:8.052px;color:#f0f028;transform:scaleX(0.8197);-webkit-text-stroke:0.14px #f0f028;">14.48</div>
<div class="t" style="left:86.30px;width:200px;text-align:right;transform-origin:100% 50%;top:135.95px;height:8px;line-height:8px;font-size:8.052px;color:#f0f028;transform:scaleX(0.8197);-webkit-text-stroke:0.14px #f0f028;">14.00</div>
<div class="t" style="left:86.30px;width:200px;text-align:right;transform-origin:100% 50%;top:191.26px;height:8px;line-height:8px;font-size:8.052px;color:#f0f028;transform:scaleX(0.8197);-webkit-text-stroke:0.14px #f0f028;">13.00</div>
<div class="t" style="left:86.30px;width:200px;text-align:right;transform-origin:100% 50%;top:246.57px;height:8px;line-height:8px;font-size:8.052px;color:#f0f028;transform:scaleX(0.8197);-webkit-text-stroke:0.14px #f0f028;">12.00</div>
<div class="t" style="left:86.30px;width:200px;text-align:right;transform-origin:100% 50%;top:301.88px;height:8px;line-height:8px;font-size:8.052px;color:#f0f028;transform:scaleX(0.8197);-webkit-text-stroke:0.14px #f0f028;">11.00</div>
<div class="t" style="left:86.30px;width:200px;text-align:right;transform-origin:100% 50%;top:357.19px;height:8px;line-height:8px;font-size:8.052px;color:#f0f028;transform:scaleX(0.8197);-webkit-text-stroke:0.14px #f0f028;">10.00</div>
<div class="t" style="left:86.30px;width:200px;text-align:right;transform-origin:100% 50%;top:412.50px;height:8px;line-height:8px;font-size:8.052px;color:#f0f028;transform:scaleX(0.8197);-webkit-text-stroke:0.14px #f0f028;">9.00</div>
<div class="t" style="left:86.30px;width:200px;text-align:right;transform-origin:100% 50%;top:467.81px;height:8px;line-height:8px;font-size:8.052px;color:#f0f028;transform:scaleX(0.8197);-webkit-text-stroke:0.14px #f0f028;">8.00</div>
<div class="t" style="left:291.90px;transform-origin:0 50%;top:490.60px;height:8px;line-height:8px;font-size:8.052px;color:#f0f028;transform:scaleX(0.8197);-webkit-text-stroke:0.14px #f0f028;">20.00 Hz</div>
<div class="t" style="left:312.70px;width:200px;text-align:center;transform-origin:50% 50%;top:490.60px;height:8px;line-height:8px;font-size:8.052px;color:#f0f028;transform:scaleX(0.8197);-webkit-text-stroke:0.14px #f0f028;">100.00</div>
<div class="t" style="left:485.53px;width:200px;text-align:center;transform-origin:50% 50%;top:490.60px;height:8px;line-height:8px;font-size:8.052px;color:#f0f028;transform:scaleX(0.8197);-webkit-text-stroke:0.14px #f0f028;">1000.00</div>
<div class="t" style="left:658.36px;width:200px;text-align:center;transform-origin:50% 50%;top:490.60px;height:8px;line-height:8px;font-size:8.052px;color:#f0f028;transform:scaleX(0.8197);-webkit-text-stroke:0.14px #f0f028;">10000.00</div>
<div class="t" style="left:610.40px;width:200px;text-align:right;transform-origin:100% 50%;top:490.60px;height:8px;line-height:8px;font-size:8.052px;color:#f0f028;transform:scaleX(0.8197);-webkit-text-stroke:0.14px #f0f028;">20000.00</div>
<div style="left:820.50px;top:95.20px;width:6.40px;height:6.40px;background:#fff;border-top:0.9px solid #777;border-left:0.9px solid #777;border-right:0.9px solid #d8d8d8;border-bottom:0.9px solid #d8d8d8;box-sizing:border-box;"></div>
<svg class="a" style="left:820.50px;top:95.20px" width="6.4" height="6.4"><path d="M1.2 2.9L2.6 4.5L5.1 1.4" stroke="#000" stroke-width="1.25" fill="none"/></svg>
<svg class="a" style="left:829.00px;top:95.00px" width="8.5" height="7.2" viewBox="0 0 8.5 7.2"><rect width="8.5" height="7.2" fill="#000"/><path d="M1 6.2L5.2 1.5H8" stroke="#e8e800" stroke-width="0.9" fill="none"/></svg>
<div style="left:838.00px;top:94.60px;width:99.30px;height:7.90px;background:#3399ff"></div>
<div class="t" style="left:840.70px;transform-origin:0 50%;top:95.40px;height:8px;line-height:8px;font-size:7.564px;color:#fff;transform:scaleX(0.8197);">A&nbsp;&nbsp;Sweep of Ch A RMS ampl</div>
<div style="left:820.50px;top:103.80px;width:6.40px;height:6.40px;background:#fff;border-top:0.9px solid #777;border-left:0.9px solid #777;border-right:0.9px solid #d8d8d8;border-bottom:0.9px solid #d8d8d8;box-sizing:border-box;"></div>
<svg class="a" style="left:820.50px;top:103.80px" width="6.4" height="6.4"><path d="M1.2 2.9L2.6 4.5L5.1 1.4" stroke="#000" stroke-width="1.25" fill="none"/></svg>
<svg class="a" style="left:829.00px;top:103.60px" width="8.5" height="7.2" viewBox="0 0 8.5 7.2"><rect width="8.5" height="7.2" fill="#000"/><path d="M1 6.2L6.8 1.2" stroke="#e020e0" stroke-width="0.9" fill="none"/></svg>
<div class="t" style="left:840.70px;transform-origin:0 50%;top:104.00px;height:8px;line-height:8px;font-size:7.564px;color:#4a3c34;transform:scaleX(0.8197);"><span style="color:#a06040">B</span>&nbsp;&nbsp;Sweep of Ch B RMS ampl</div>
<svg class="a" style="left:937.80px;top:95.20px" width="7.5" height="6.5" viewBox="0 0 7.5 6.5"><rect x="0.3" y="0.5" width="3" height="5.5" fill="#b0b0b0" stroke="#444" stroke-width="0.6"/><rect x="2.8" y="2" width="4.2" height="4.3" fill="#9090b8" stroke="#3030a0" stroke-width="0.7"/></svg>
<svg class="a" style="left:937.80px;top:103.80px" width="7.5" height="6.5" viewBox="0 0 7.5 6.5"><rect x="0.3" y="0.5" width="3" height="5.5" fill="#b0b0b0" stroke="#444" stroke-width="0.6"/><rect x="2.8" y="2" width="4.2" height="4.3" fill="#9090b8" stroke="#3030a0" stroke-width="0.7"/></svg>
<div style="left:0.00px;top:543.40px;width:1024.00px;height:1.00px;background:#fcfcfc"></div>
<svg class="a" style="left:702.40px;top:546.20px" width="7.5" height="7.3" viewBox="0 0 7.5 7.3"><rect x="0.5" y="0.8" width="6" height="5" fill="#e8e8f8" stroke="#333" stroke-width="0.7"/><path d="M1.5 4L3 2L4.5 3.5L6 1.5" stroke="#e02020" stroke-width="0.7" fill="none"/><path d="M1 6.8H6.5" stroke="#2040c0" stroke-width="0.8"/></svg>
<svg class="a" style="left:712.80px;top:546.20px" width="7.5" height="7.3" viewBox="0 0 7.5 7.3"><rect x="0.5" y="0.5" width="6.5" height="3.8" fill="#303030"/><rect x="1.3" y="1.2" width="4.8" height="2.3" fill="#e0e0e0"/><path d="M2 4.3V7M5.5 4.3V7" stroke="#333" stroke-width="0.8"/></svg>
<div style="left:722.00px;top:545.60px;width:21.60px;height:9.40px;border-top:1px solid #c8c8c8;border-left:1px solid #c8c8c8;border-right:1px solid #fff;box-sizing:border-box"></div>
<div class="t" style="left:723.50px;transform-origin:0 50%;top:546.70px;height:8px;line-height:8px;font-size:6.900px;color:#a0a0a0;transform:scaleX(0.8696);">SC out</div>
<div style="left:744.80px;top:545.60px;width:8.10px;height:9.40px;border-top:1px solid #c8c8c8;border-left:1px solid #c8c8c8;border-right:1px solid #fff;box-sizing:border-box"></div>
<svg class="a" style="left:745.80px;top:547.50px" width="6" height="5" viewBox="0 0 6 5"><path d="M0.5 2.5H4M2.5 0.8L4.5 2.5L2.5 4.2" stroke="#000" stroke-width="1.1" fill="none"/></svg>
<div style="left:754.10px;top:545.60px;width:28.40px;height:9.40px;border-top:1px solid #c8c8c8;border-left:1px solid #c8c8c8;border-right:1px solid #fff;box-sizing:border-box"></div>
<div class="t" style="left:755.30px;transform-origin:0 50%;top:546.70px;height:8px;line-height:8px;font-size:6.900px;color:#101030;transform:scaleX(0.8696);-webkit-text-stroke:0.05px #101030;">Bal/unbal</div>
<div style="left:784.10px;top:545.60px;width:26.90px;height:9.40px;background:#ff0000"></div>
<div class="t" style="left:697.50px;width:200px;text-align:center;transform-origin:50% 50%;top:546.70px;height:8px;line-height:8px;font-size:7.130px;color:#5a0000;transform:scaleX(0.8696);-webkit-text-stroke:0.05px #5a0000;">XLR</div>
<div style="left:812.10px;top:545.60px;width:18.40px;height:9.40px;border-top:1px solid #c8c8c8;border-left:1px solid #c8c8c8;border-right:1px solid #fff;box-sizing:border-box"></div>
<div class="t" style="left:813.40px;transform-origin:0 50%;top:546.70px;height:8px;line-height:8px;font-size:6.900px;color:#a0a0a0;transform:scaleX(0.8696);">SC in</div>
<div style="left:831.80px;top:545.60px;width:8.30px;height:9.40px;background:#ff0000"></div>
<svg class="a" style="left:832.80px;top:546.50px" width="6.5" height="7" viewBox="0 0 6.5 7"><path d="M1 1.5H5.5V5.5H1Z" fill="none" stroke="#600000" stroke-width="0.8"/><path d="M1 1.5L5.5 5.5M5.5 1.5L1 5.5" stroke="#600000" stroke-width="0.7"/></svg>
<div style="left:841.40px;top:545.60px;width:29.60px;height:9.40px;border-top:1px solid #c8c8c8;border-left:1px solid #c8c8c8;border-right:1px solid #fff;box-sizing:border-box"></div>
<div style="left:872.00px;top:545.60px;width:30.00px;height:9.40px;border-top:1px solid #c8c8c8;border-left:1px solid #c8c8c8;border-right:1px solid #fff;box-sizing:border-box"></div>
<div style="left:904.60px;top:546.20px;width:22.20px;height:7.40px;border-top:1px solid #909090;border-left:1px solid #909090;border-right:1px solid #222;border-bottom:1px solid #222;box-sizing:border-box"></div>
<div class="t" style="left:815.70px;width:200px;text-align:center;transform-origin:50% 50%;top:546.00px;height:8px;line-height:8px;font-size:6.944px;color:#000;transform:scaleX(0.8929);font-weight:bold">Page 1</div>
<div style="left:927.80px;top:546.40px;width:22.60px;height:6.90px;border-top:1px solid #8a8a8a;border-left:1px solid #8a8a8a;border-right:1.2px solid #1a1a1a;border-bottom:1.2px solid #1a1a1a;box-sizing:border-box;background:#f6f6f6"></div>
<div class="t" style="left:839.10px;width:200px;text-align:center;transform-origin:50% 50%;top:545.90px;height:8px;line-height:8px;font-size:6.608px;color:#1a1a1a;transform:scaleX(0.8475);-webkit-text-stroke:0.05px #1a1a1a;">Page 2</div>
<div style="left:951.40px;top:546.40px;width:22.50px;height:6.90px;border-top:1px solid #8a8a8a;border-left:1px solid #8a8a8a;border-right:1.2px solid #1a1a1a;border-bottom:1.2px solid #1a1a1a;box-sizing:border-box;background:#f6f6f6"></div>
<div class="t" style="left:862.65px;width:200px;text-align:center;transform-origin:50% 50%;top:545.90px;height:8px;line-height:8px;font-size:6.608px;color:#1a1a1a;transform:scaleX(0.8475);-webkit-text-stroke:0.05px #1a1a1a;">Page 3</div>
<div style="left:974.80px;top:546.40px;width:22.40px;height:6.90px;border-top:1px solid #8a8a8a;border-left:1px solid #8a8a8a;border-right:1.2px solid #1a1a1a;border-bottom:1.2px solid #1a1a1a;box-sizing:border-box;background:#f6f6f6"></div>
<div class="t" style="left:886.00px;width:200px;text-align:center;transform-origin:50% 50%;top:545.90px;height:8px;line-height:8px;font-size:6.608px;color:#1a1a1a;transform:scaleX(0.8475);-webkit-text-stroke:0.05px #1a1a1a;">Page 4</div>
<div style="left:998.50px;top:546.40px;width:23.00px;height:6.90px;border-top:1px solid #8a8a8a;border-left:1px solid #8a8a8a;border-right:1.2px solid #1a1a1a;border-bottom:1.2px solid #1a1a1a;box-sizing:border-box;background:#f6f6f6"></div>
<div class="t" style="left:910.00px;width:200px;text-align:center;transform-origin:50% 50%;top:545.90px;height:8px;line-height:8px;font-size:6.608px;color:#1a1a1a;transform:scaleX(0.8475);-webkit-text-stroke:0.05px #1a1a1a;">Page 5</div>
</body></html>
